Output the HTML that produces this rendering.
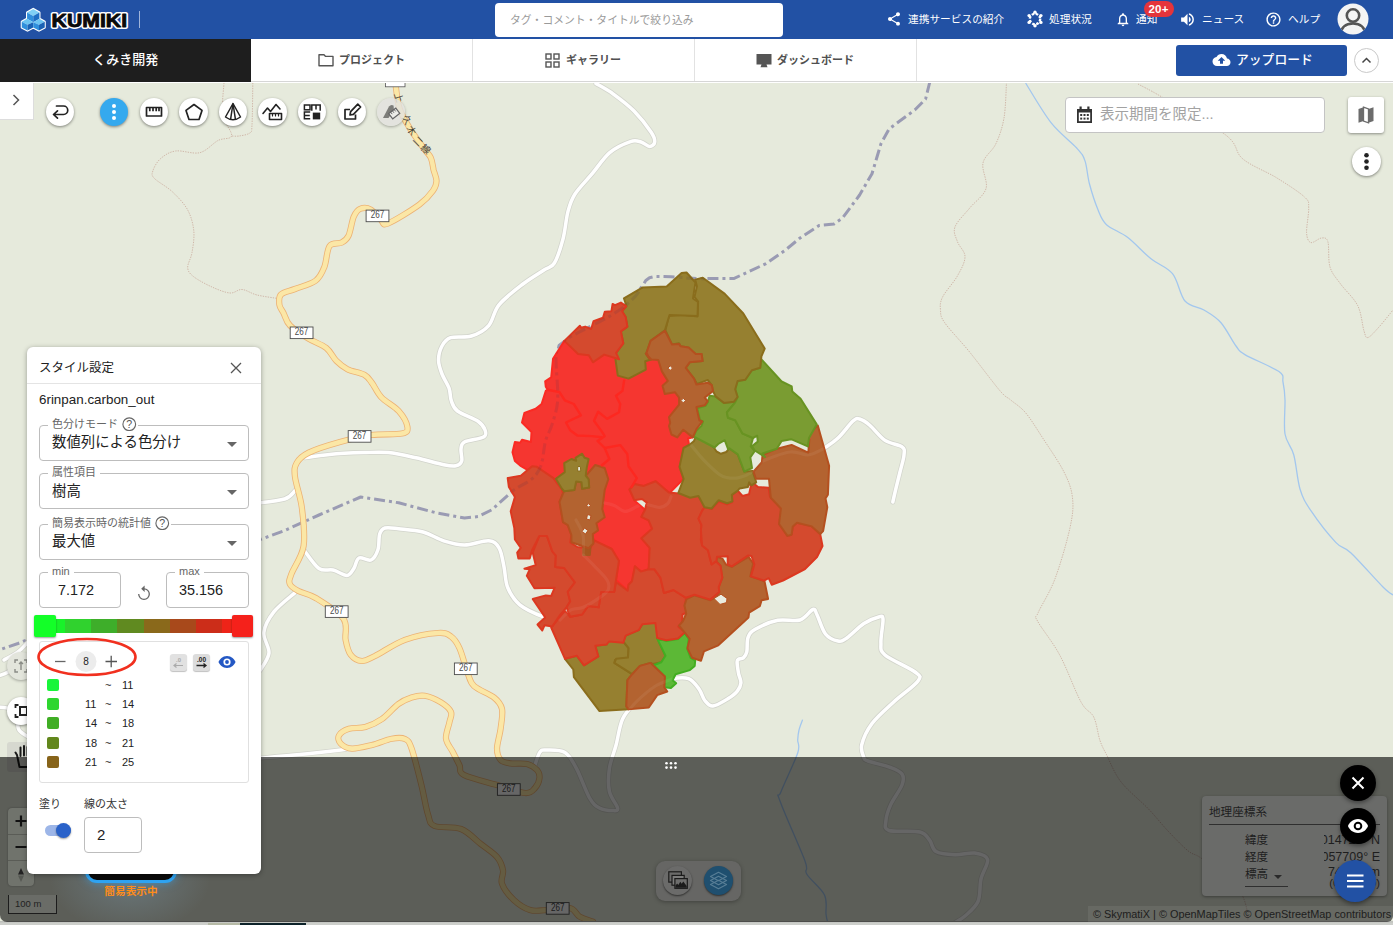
<!DOCTYPE html>
<html lang="ja">
<head>
<meta charset="utf-8">
<title>KUMIKI</title>
<style>
*{box-sizing:border-box;margin:0;padding:0}
html,body{width:1393px;height:925px;overflow:hidden;background:#e6eadc;font-family:"Liberation Sans","Noto Sans CJK JP",sans-serif;color:#222}
.abs{position:absolute}
#map{position:absolute;left:0;top:0;width:1393px;height:925px}
/* header */
#hdr{position:absolute;left:0;top:0;width:1393px;height:39px;background:#2251a4;color:#fff}
#hdr .t{position:absolute;top:12px;font-size:10.7px;line-height:14px;white-space:nowrap;color:#fff}
#search{position:absolute;left:495px;top:3px;width:288px;height:34px;background:#fff;border-radius:4px;color:#9a9a9a;font-size:10.8px;line-height:34px;padding-left:15px}
#nav{position:absolute;left:0;top:39px;width:1393px;height:44px;background:#fff}
#nav:after{content:'';position:absolute;left:251px;top:42px;width:1142px;height:1px;background:#d6d6d6}
#org{position:absolute;left:0;top:0;width:251px;height:43px;background:#1e1e1e;color:#fff;font-size:13px;font-weight:500;line-height:42px;text-align:center}
.tab{position:absolute;top:0;height:42px;width:222px;border-right:1px solid #e2e2e2;font-size:11px;font-weight:700;color:#505050;line-height:42px;text-align:center}
#upload{position:absolute;left:1176px;top:6px;width:171px;height:31px;background:#2251a4;border-radius:3px;color:#fff;font-size:12.800px;font-weight:500;line-height:30px}
.cbtn{position:absolute;width:30px;height:30px;border-radius:50%;background:#fff;box-shadow:0 1px 3px rgba(0,0,0,.45)}
.cbtn svg{position:absolute;left:0;top:0}
/* panel */
#panel{position:absolute;left:27.400px;top:346.800px;width:233.200px;height:527px;background:#fff;border-radius:6px;box-shadow:0 1px 5px rgba(0,0,0,.35)}
.fld{position:absolute;left:11px;width:210px;height:36px;border:1px solid #bdbdbd;border-radius:4px}
.fld .lb{position:absolute;left:8px;top:-9px;background:#fff;padding:0 4px;font-size:11px;line-height:14px;color:#666;white-space:nowrap}
.fld .v{position:absolute;left:12px;top:6px;font-size:14.4px;line-height:20px;color:#222;white-space:nowrap}
.fld .ar{position:absolute;right:11px;top:16px;width:0;height:0;border-left:5px solid transparent;border-right:5px solid transparent;border-top:5px solid #666}
.lg{position:absolute;left:7px;width:12px;height:12px;border-radius:2px}
.lt{position:absolute;font-size:11px;line-height:12px;color:#222}
</style>
</head>
<body>
<svg id="map" width="1393" height="925" viewBox="0 0 1393 925">
<rect x="0" y="0" width="1393" height="925" fill="#e6eadc"/>
<path d="M224.0,83.0 C223.8,86.5 222.5,98.0 222.5,104.0 C222.5,110.0 222.5,113.7 224.0,119.0 C225.5,124.3 232.6,132.4 231.6,136.0 C230.6,139.6 223.3,137.7 218.0,140.5 C212.7,143.3 206.9,150.9 199.8,152.7 C192.7,154.4 182.2,150.0 175.6,151.0 C169.0,152.0 164.3,155.4 160.5,158.7 C156.7,162.0 153.9,167.5 152.9,170.8 C151.9,174.1 151.1,174.9 154.4,178.4 C157.7,181.9 167.1,186.7 172.6,192.0 C178.1,197.3 184.2,203.5 187.7,210.0 C191.2,216.5 193.1,223.9 193.8,231.0 C194.5,238.1 193.0,246.5 192.0,252.6 C191.0,258.7 187.4,263.7 187.7,267.7 C188.0,271.7 189.8,273.6 193.8,276.8 C197.9,280.0 206.0,284.3 212.0,287.0 C218.0,289.7 225.0,292.6 230.0,293.0 C235.0,293.4 237.5,289.2 242.0,289.5 C246.5,289.8 250.9,293.5 257.0,295.0 C263.1,296.5 274.9,298.0 278.5,298.6" fill="none" stroke="#cdb2a4" stroke-width="0.9" stroke-dasharray="1.4,1.1"/>
<path d="M252.8,83.0 C252.7,90.0 252.5,116.7 252.0,125.0 C251.5,133.3 252.0,131.2 249.8,133.0 C247.6,134.8 242.0,135.5 239.0,136.0 C236.0,136.5 232.8,136.0 231.6,136.0" fill="none" stroke="#cdb2a4" stroke-width="0.9" stroke-dasharray="1.4,1.1"/>
<path d="M1006.5,82.0 C1006.1,88.0 1005.8,107.7 1004.0,118.0 C1002.2,128.3 999.3,136.4 995.8,143.9 C992.3,151.4 984.6,155.6 983.0,163.0 C981.4,170.4 988.2,181.2 986.0,188.6 C983.8,196.0 975.2,201.3 970.0,207.7 C964.8,214.1 957.1,221.2 955.0,226.9 C952.9,232.6 955.8,236.8 957.5,241.8 C959.2,246.8 965.0,251.0 965.0,256.7 C965.0,262.4 961.2,269.1 957.5,275.8 C953.8,282.5 945.4,291.3 942.6,297.0 C939.8,302.7 940.1,305.7 940.5,310.0 C940.9,314.3 939.8,315.6 944.7,322.7 C949.6,329.8 960.8,341.1 970.0,352.5 C979.2,363.9 993.2,382.9 1000.0,390.8 C1006.8,398.7 1006.4,396.3 1010.7,400.0 C1015.0,403.7 1020.3,406.5 1025.6,412.8 C1030.9,419.1 1036.3,428.1 1042.7,438.0 C1049.1,447.9 1059.0,462.0 1064.0,472.0 C1069.0,482.0 1071.5,488.7 1072.5,498.0 C1073.5,507.3 1072.9,514.2 1070.0,527.7 C1067.1,541.2 1060.3,564.6 1055.0,578.8 C1049.7,593.0 1040.9,606.0 1038.0,613.0 C1035.1,620.0 1033.9,614.0 1037.5,621.0 C1041.1,628.0 1052.5,641.5 1059.7,655.0 C1067.0,668.5 1075.3,691.7 1081.0,702.0 C1086.7,712.3 1090.5,710.6 1093.7,717.0 C1096.9,723.4 1097.8,734.3 1100.0,740.6 C1102.2,746.9 1103.1,747.9 1106.6,754.8 C1110.1,761.7 1114.0,772.9 1121.0,781.9 C1128.0,790.9 1140.7,800.8 1148.5,809.0 C1156.3,817.2 1161.4,824.0 1168.0,831.0 C1174.6,838.0 1182.5,846.3 1188.0,850.8 C1193.5,855.3 1194.0,853.1 1201.0,858.0 C1208.0,862.9 1223.2,873.8 1230.0,880.0 C1236.8,886.2 1239.2,890.0 1242.0,895.0 C1244.8,900.0 1246.0,905.5 1247.0,910.0 C1248.0,914.5 1247.8,920.0 1248.0,922.0" fill="none" stroke="#cdb2a4" stroke-width="0.9" stroke-dasharray="1.4,1.1"/>
<path d="M1138.0,84.0 C1142.0,86.2 1147.3,88.5 1161.9,97.0 C1176.5,105.5 1212.2,124.7 1225.7,135.0 C1239.2,145.3 1234.2,151.7 1242.7,158.8 C1251.2,166.0 1266.5,171.5 1276.8,177.9 C1287.1,184.3 1299.2,192.0 1304.5,197.0 C1309.8,202.0 1308.4,201.7 1308.7,207.7 C1309.0,213.7 1306.2,227.2 1306.6,233.0 C1307.0,238.8 1308.4,241.8 1310.9,242.6 C1313.4,243.4 1318.7,238.1 1321.5,238.0 C1324.3,237.9 1326.5,237.0 1327.9,241.8 C1329.3,246.6 1327.9,260.0 1330.0,267.0 C1332.1,274.0 1336.0,277.6 1340.6,284.0 C1345.2,290.4 1353.8,297.8 1357.7,305.6 C1361.6,313.4 1362.3,325.7 1364.0,331.0 C1365.7,336.3 1365.5,338.2 1368.0,337.5 C1370.5,336.8 1374.8,331.6 1379.0,327.0 C1383.2,322.4 1390.7,312.8 1393.0,310.0" fill="none" stroke="#cdb2a4" stroke-width="0.9" stroke-dasharray="1.4,1.1"/>
<path d="M1025.6,83.0 C1029.8,89.6 1042.5,111.8 1051.0,122.6 C1059.5,133.4 1071.0,141.6 1076.7,148.0 C1082.4,154.4 1082.9,154.9 1085.0,160.9 C1087.1,166.9 1087.3,175.8 1089.5,184.0 C1091.7,192.2 1095.2,203.0 1098.0,209.8 C1100.8,216.6 1101.5,220.1 1106.5,224.7 C1111.5,229.3 1120.4,231.8 1127.8,237.5 C1135.2,243.2 1143.5,252.8 1151.0,258.8 C1158.5,264.8 1166.8,266.7 1172.5,273.7 C1178.2,280.7 1179.8,294.9 1185.0,301.0 C1190.2,307.1 1198.0,306.4 1204.0,310.0 C1210.0,313.6 1215.7,316.7 1221.0,322.7 C1226.3,328.7 1232.0,340.7 1236.0,346.0 C1240.0,351.3 1237.7,350.3 1244.9,354.6 C1252.1,358.9 1272.7,367.0 1279.0,371.6 C1285.3,376.2 1282.0,377.3 1283.0,382.0 C1284.0,386.7 1284.7,391.3 1285.0,400.0 C1285.3,408.7 1283.5,424.8 1285.0,434.0 C1286.5,443.2 1291.3,445.8 1293.8,455.0 C1296.3,464.2 1297.2,479.7 1300.0,489.0 C1302.8,498.3 1304.9,501.8 1310.9,510.7 C1316.9,519.6 1329.3,535.6 1336.0,542.6 C1342.7,549.6 1343.2,545.6 1351.0,553.0 C1358.8,560.4 1376.0,580.0 1383.0,587.0 C1390.0,594.0 1391.3,593.7 1393.0,595.0" fill="none" stroke="#a3c7ee" stroke-width="1.3"/>
<path d="M802.6,719.6 C802.0,721.3 799.8,726.6 799.0,730.0 C798.2,733.4 797.9,736.2 797.7,740.0 C797.5,743.8 800.5,744.4 797.7,753.0 C794.9,761.6 784.0,783.7 781.0,791.7 C778.0,799.7 776.0,789.5 780.0,801.0 C784.0,812.5 800.5,848.8 805.0,861.0 C809.5,873.2 803.5,868.3 806.7,874.0 C810.0,879.7 821.3,888.3 824.5,895.0 C827.7,901.7 825.5,909.4 826.0,914.0 C826.5,918.6 827.4,921.1 827.7,922.5" fill="none" stroke="#a3c7ee" stroke-width="1.3"/>
<path d="M929.8,82.0 L925.6,99.0 L915.0,109.8 L889.0,129.0 L880.9,143.9 L872.0,173.7 L859.6,195.0 L842.6,218.0 L834.0,224.0 L819.0,225.6 L800.0,238.0 L785.5,250.0 L766.0,263.6 L733.7,278.6 L698.0,278.6 L671.0,276.7 L655.0,276.5 L649.5,277.8 L645.8,280.5 L643.7,284.0 L632.7,299.0 L611.0,315.5 L570.0,337.0 L559.0,345.5 L556.0,359.0 L557.7,400.0 L552.0,424.6 L545.5,441.0 L541.0,465.5 L531.8,479.0 L512.9,490.7 L492.0,509.7 L478.0,516.6 L464.5,518.0 L436.8,513.0 L398.7,502.8 L360.7,497.0 L319.0,515.0 L284.6,530.5 L255.0,541.5 L130.0,598.0 L18.0,643.5 L-4.0,651.0" fill="none" stroke="#9a9bb3" stroke-width="3" stroke-dasharray="11,4,3,4" stroke-linejoin="round"/>
<path d="M596.0,83.5 C598.8,85.2 606.7,89.2 613.0,93.8 C619.3,98.4 627.7,104.6 634.0,111.0 C640.3,117.4 647.5,126.8 651.0,132.0 C654.5,137.2 655.0,139.6 654.7,142.0 C654.5,144.4 651.8,146.4 649.5,146.4 C647.2,146.4 644.2,142.8 641.0,142.0 C637.8,141.2 635.7,139.8 630.5,141.6 C625.3,143.4 616.1,147.3 609.7,152.6 C603.4,157.9 598.2,166.5 592.4,173.4 C586.6,180.3 579.1,187.7 575.0,194.0 C570.9,200.3 570.0,203.9 568.0,211.4 C566.0,218.9 565.3,230.4 563.0,239.0 C560.7,247.6 557.6,257.8 554.4,263.0 C551.2,268.2 549.2,266.5 544.0,270.0 C538.8,273.5 530.5,278.2 523.0,284.0 C515.5,289.8 504.7,297.9 499.0,304.8 C493.3,311.7 493.3,320.4 488.7,325.6 C484.1,330.8 477.8,334.0 471.4,336.0 C465.0,338.0 455.5,336.0 450.6,337.7 C445.7,339.4 444.0,342.3 442.0,346.0 C440.0,349.7 438.5,355.3 438.5,360.0 C438.5,364.7 440.2,369.3 442.0,374.0 C443.8,378.7 447.4,383.6 449.0,388.0 C450.6,392.4 449.9,396.9 451.3,400.7 C452.7,404.5 453.0,407.5 457.5,411.0 C462.0,414.5 473.7,418.3 478.3,421.5 C482.9,424.7 484.1,427.4 485.0,430.0 C485.9,432.6 486.9,435.0 483.5,437.0 C480.1,439.0 468.2,440.0 464.5,442.0 C460.8,444.0 461.5,445.8 461.0,449.0 C460.5,452.2 462.6,458.2 461.7,461.0 C460.8,463.8 458.8,465.2 455.8,465.8 C452.8,466.4 450.3,466.0 443.7,464.7 C437.1,463.4 425.2,459.8 416.0,457.8 C406.8,455.8 397.1,453.5 388.4,452.6 C379.7,451.7 373.8,452.3 364.0,452.6 C354.2,452.9 339.4,453.5 329.6,454.4 C319.8,455.3 309.1,457.2 305.0,457.8" fill="none" stroke="#d2d4cc" stroke-width="5" stroke-linecap="round" stroke-linejoin="round"/>
<path d="M255.0,503.5 C259.9,502.8 277.9,501.1 284.6,499.0 C291.3,496.9 293.3,492.1 295.0,490.7" fill="none" stroke="#d2d4cc" stroke-width="5" stroke-linecap="round" stroke-linejoin="round"/>
<path d="M303.6,549.5 C306.2,552.7 314.1,565.1 319.0,568.5 C323.9,571.9 328.4,568.9 333.0,570.0 C337.6,571.1 343.4,575.6 346.9,575.4 C350.4,575.1 351.8,571.4 353.8,568.5 C355.8,565.6 356.1,559.4 359.0,558.0 C361.9,556.6 367.8,561.4 371.0,560.0 C374.2,558.6 376.6,553.8 378.0,549.5 C379.4,545.2 378.5,537.6 379.7,534.0 C380.9,530.4 381.8,528.9 385.0,528.0 C388.2,527.1 392.4,528.0 398.7,528.7 C405.0,529.4 415.5,530.0 423.0,532.0 C430.5,534.0 436.8,538.6 443.7,540.8 C450.6,543.0 457.0,545.0 464.5,545.0 C472.0,545.0 482.9,540.3 488.7,540.8 C494.4,541.3 496.4,543.5 499.0,547.8 C501.6,552.1 502.6,560.2 504.0,566.8 C505.4,573.4 505.1,581.2 507.7,587.5 C510.3,593.8 513.8,599.9 519.8,604.8 C525.8,609.7 537.3,614.5 544.0,617.0 C550.7,619.5 557.3,619.5 560.0,620.0" fill="none" stroke="#d2d4cc" stroke-width="5" stroke-linecap="round" stroke-linejoin="round"/>
<path d="M295.0,592.7 C291.5,595.9 279.2,605.1 274.0,611.7 C268.8,618.3 264.6,625.6 263.8,632.5 C263.0,639.4 269.6,646.7 269.0,653.0 C268.4,659.3 261.5,667.6 260.0,670.5" fill="none" stroke="#d2d4cc" stroke-width="5" stroke-linecap="round" stroke-linejoin="round"/>
<path d="M250.0,759.0 C258.3,758.2 284.0,756.1 300.0,754.5 C316.0,752.9 338.3,750.2 346.0,749.3" fill="none" stroke="#d2d4cc" stroke-width="5" stroke-linecap="round" stroke-linejoin="round"/>
<path d="M-2.0,676.0 C-0.3,675.3 4.7,674.0 8.0,672.0 C11.3,670.0 14.3,666.3 18.0,664.0 C21.7,661.7 28.0,659.0 30.0,658.0" fill="none" stroke="#d2d4cc" stroke-width="5" stroke-linecap="round" stroke-linejoin="round"/>
<path d="M-2.0,707.0 C0.0,707.3 6.8,707.2 10.0,709.0 C13.2,710.8 15.5,714.5 17.0,718.0 C18.5,721.5 16.8,726.7 19.0,730.0 C21.2,733.3 28.2,736.7 30.0,738.0" fill="none" stroke="#d2d4cc" stroke-width="5" stroke-linecap="round" stroke-linejoin="round"/>
<path d="M30.0,640.0 C28.0,642.0 22.3,648.7 18.0,652.0 C13.7,655.3 6.3,658.7 4.0,660.0" fill="none" stroke="#d2d4cc" stroke-width="5" stroke-linecap="round" stroke-linejoin="round"/>
<path d="M535.0,765.0 C535.8,762.8 538.0,754.5 540.0,752.0 C542.0,749.5 542.5,749.9 546.7,750.0 C550.9,750.1 560.0,749.4 565.0,752.5 C570.0,755.6 572.3,760.8 576.4,768.4 C580.5,776.0 585.8,791.4 589.6,798.0 C593.5,804.6 595.6,805.9 599.5,808.0 C603.4,810.1 609.7,810.6 612.7,810.6 C615.7,810.6 618.2,811.2 617.6,808.0 C617.0,804.8 610.8,798.0 609.4,791.4 C608.0,784.8 608.3,776.1 609.4,768.4 C610.5,760.7 613.8,753.5 616.0,745.3 C618.2,737.1 619.3,726.1 622.6,719.0 C625.9,711.9 630.3,707.9 635.8,702.4 C641.3,696.9 649.5,689.9 655.5,686.0 C661.5,682.1 666.5,680.2 672.0,679.0 C677.5,677.8 684.0,677.0 688.5,678.7 C693.0,680.4 696.3,685.4 699.0,689.0 C701.7,692.6 702.5,697.7 704.8,700.5 C707.1,703.3 709.2,706.3 713.0,706.0 C716.8,705.7 723.8,701.3 727.8,698.8 C731.8,696.3 735.1,693.8 737.3,691.1 C739.5,688.4 740.7,685.8 740.9,682.8 C741.1,679.8 739.1,676.8 738.5,673.3 C737.9,669.8 737.1,664.3 737.1,662.0 C737.1,659.7 737.5,660.0 738.5,659.3 C739.5,658.6 741.9,659.0 743.3,657.8 C744.7,656.6 746.0,655.3 746.8,651.9 C747.6,648.5 746.6,641.4 748.0,637.6 C749.4,633.8 750.2,632.2 755.2,629.3 C760.2,626.4 770.3,621.8 777.8,620.3 C785.3,618.8 794.2,621.8 800.0,620.0 C805.8,618.2 810.0,610.4 812.8,609.5 C815.6,608.6 814.9,610.6 817.0,614.7 C819.1,618.8 822.0,629.6 825.5,634.0 C829.0,638.4 834.5,640.3 838.0,641.0 C841.5,641.7 842.5,640.9 846.8,638.0 C851.1,635.1 858.6,627.0 863.9,623.5 C869.2,620.0 875.6,617.8 878.8,617.0 C882.0,616.2 882.6,614.7 883.0,619.0 C883.4,623.3 880.6,636.7 880.9,642.7 C881.2,648.7 879.3,650.1 885.0,655.0 C890.7,659.9 909.5,667.7 915.0,672.0 C920.5,676.3 921.5,676.0 918.0,681.0 C914.5,686.0 901.4,694.9 893.7,702.0 C886.0,709.1 877.3,716.4 872.0,723.5 C866.7,730.6 863.1,739.1 861.7,744.8 C860.4,750.5 862.9,754.9 863.9,757.6 C864.9,760.3 863.5,759.4 868.0,761.0 C872.5,762.6 885.0,765.3 890.7,767.5 C896.4,769.7 900.1,771.1 902.0,774.0 C903.9,776.9 903.9,779.9 902.0,785.0 C900.1,790.1 893.4,798.6 890.7,804.6 C888.0,810.6 886.2,816.5 885.9,820.8 C885.6,825.1 883.4,828.6 889.0,830.5 C894.6,832.4 913.0,830.4 919.8,832.0 C926.5,833.6 926.8,836.8 929.5,840.0 C932.2,843.2 931.8,849.0 936.0,851.5 C940.2,854.0 948.5,854.5 955.0,854.7 C961.5,855.0 969.3,852.2 974.7,853.0 C980.1,853.8 986.6,855.2 987.6,859.5 C988.6,863.8 982.6,872.0 981.0,879.0 C979.4,886.0 980.7,895.3 978.0,901.5 C975.3,907.7 968.8,912.5 965.0,916.0 C961.2,919.5 956.7,921.4 955.0,922.5" fill="none" stroke="#d2d4cc" stroke-width="5" stroke-linecap="round" stroke-linejoin="round"/>
<path d="M790.0,470.0 C795.5,466.5 815.0,454.3 823.0,449.0 C831.0,443.7 833.0,442.7 838.0,438.0 C843.0,433.3 849.4,424.2 853.0,421.0 C856.6,417.8 856.8,418.2 859.6,419.0 C862.4,419.8 865.8,421.9 870.0,425.5 C874.2,429.1 879.7,436.8 885.0,440.4 C890.3,443.9 898.8,444.4 902.0,446.8 C905.2,449.2 904.3,450.8 904.0,455.0 C903.7,459.2 901.4,466.3 900.0,472.0 C898.6,477.7 897.0,484.0 895.8,489.0 C894.6,494.0 893.3,499.8 892.8,502.0" fill="none" stroke="#d2d4cc" stroke-width="5" stroke-linecap="round" stroke-linejoin="round"/>
<path d="M596.0,83.5 C598.8,85.2 606.7,89.2 613.0,93.8 C619.3,98.4 627.7,104.6 634.0,111.0 C640.3,117.4 647.5,126.8 651.0,132.0 C654.5,137.2 655.0,139.6 654.7,142.0 C654.5,144.4 651.8,146.4 649.5,146.4 C647.2,146.4 644.2,142.8 641.0,142.0 C637.8,141.2 635.7,139.8 630.5,141.6 C625.3,143.4 616.1,147.3 609.7,152.6 C603.4,157.9 598.2,166.5 592.4,173.4 C586.6,180.3 579.1,187.7 575.0,194.0 C570.9,200.3 570.0,203.9 568.0,211.4 C566.0,218.9 565.3,230.4 563.0,239.0 C560.7,247.6 557.6,257.8 554.4,263.0 C551.2,268.2 549.2,266.5 544.0,270.0 C538.8,273.5 530.5,278.2 523.0,284.0 C515.5,289.8 504.7,297.9 499.0,304.8 C493.3,311.7 493.3,320.4 488.7,325.6 C484.1,330.8 477.8,334.0 471.4,336.0 C465.0,338.0 455.5,336.0 450.6,337.7 C445.7,339.4 444.0,342.3 442.0,346.0 C440.0,349.7 438.5,355.3 438.5,360.0 C438.5,364.7 440.2,369.3 442.0,374.0 C443.8,378.7 447.4,383.6 449.0,388.0 C450.6,392.4 449.9,396.9 451.3,400.7 C452.7,404.5 453.0,407.5 457.5,411.0 C462.0,414.5 473.7,418.3 478.3,421.5 C482.9,424.7 484.1,427.4 485.0,430.0 C485.9,432.6 486.9,435.0 483.5,437.0 C480.1,439.0 468.2,440.0 464.5,442.0 C460.8,444.0 461.5,445.8 461.0,449.0 C460.5,452.2 462.6,458.2 461.7,461.0 C460.8,463.8 458.8,465.2 455.8,465.8 C452.8,466.4 450.3,466.0 443.7,464.7 C437.1,463.4 425.2,459.8 416.0,457.8 C406.8,455.8 397.1,453.5 388.4,452.6 C379.7,451.7 373.8,452.3 364.0,452.6 C354.2,452.9 339.4,453.5 329.6,454.4 C319.8,455.3 309.1,457.2 305.0,457.8" fill="none" stroke="#ffffff" stroke-width="3.5" stroke-linecap="round" stroke-linejoin="round"/>
<path d="M255.0,503.5 C259.9,502.8 277.9,501.1 284.6,499.0 C291.3,496.9 293.3,492.1 295.0,490.7" fill="none" stroke="#ffffff" stroke-width="3.5" stroke-linecap="round" stroke-linejoin="round"/>
<path d="M303.6,549.5 C306.2,552.7 314.1,565.1 319.0,568.5 C323.9,571.9 328.4,568.9 333.0,570.0 C337.6,571.1 343.4,575.6 346.9,575.4 C350.4,575.1 351.8,571.4 353.8,568.5 C355.8,565.6 356.1,559.4 359.0,558.0 C361.9,556.6 367.8,561.4 371.0,560.0 C374.2,558.6 376.6,553.8 378.0,549.5 C379.4,545.2 378.5,537.6 379.7,534.0 C380.9,530.4 381.8,528.9 385.0,528.0 C388.2,527.1 392.4,528.0 398.7,528.7 C405.0,529.4 415.5,530.0 423.0,532.0 C430.5,534.0 436.8,538.6 443.7,540.8 C450.6,543.0 457.0,545.0 464.5,545.0 C472.0,545.0 482.9,540.3 488.7,540.8 C494.4,541.3 496.4,543.5 499.0,547.8 C501.6,552.1 502.6,560.2 504.0,566.8 C505.4,573.4 505.1,581.2 507.7,587.5 C510.3,593.8 513.8,599.9 519.8,604.8 C525.8,609.7 537.3,614.5 544.0,617.0 C550.7,619.5 557.3,619.5 560.0,620.0" fill="none" stroke="#ffffff" stroke-width="3.5" stroke-linecap="round" stroke-linejoin="round"/>
<path d="M295.0,592.7 C291.5,595.9 279.2,605.1 274.0,611.7 C268.8,618.3 264.6,625.6 263.8,632.5 C263.0,639.4 269.6,646.7 269.0,653.0 C268.4,659.3 261.5,667.6 260.0,670.5" fill="none" stroke="#ffffff" stroke-width="3.5" stroke-linecap="round" stroke-linejoin="round"/>
<path d="M250.0,759.0 C258.3,758.2 284.0,756.1 300.0,754.5 C316.0,752.9 338.3,750.2 346.0,749.3" fill="none" stroke="#ffffff" stroke-width="3.5" stroke-linecap="round" stroke-linejoin="round"/>
<path d="M-2.0,676.0 C-0.3,675.3 4.7,674.0 8.0,672.0 C11.3,670.0 14.3,666.3 18.0,664.0 C21.7,661.7 28.0,659.0 30.0,658.0" fill="none" stroke="#ffffff" stroke-width="3.5" stroke-linecap="round" stroke-linejoin="round"/>
<path d="M-2.0,707.0 C0.0,707.3 6.8,707.2 10.0,709.0 C13.2,710.8 15.5,714.5 17.0,718.0 C18.5,721.5 16.8,726.7 19.0,730.0 C21.2,733.3 28.2,736.7 30.0,738.0" fill="none" stroke="#ffffff" stroke-width="3.5" stroke-linecap="round" stroke-linejoin="round"/>
<path d="M30.0,640.0 C28.0,642.0 22.3,648.7 18.0,652.0 C13.7,655.3 6.3,658.7 4.0,660.0" fill="none" stroke="#ffffff" stroke-width="3.5" stroke-linecap="round" stroke-linejoin="round"/>
<path d="M535.0,765.0 C535.8,762.8 538.0,754.5 540.0,752.0 C542.0,749.5 542.5,749.9 546.7,750.0 C550.9,750.1 560.0,749.4 565.0,752.5 C570.0,755.6 572.3,760.8 576.4,768.4 C580.5,776.0 585.8,791.4 589.6,798.0 C593.5,804.6 595.6,805.9 599.5,808.0 C603.4,810.1 609.7,810.6 612.7,810.6 C615.7,810.6 618.2,811.2 617.6,808.0 C617.0,804.8 610.8,798.0 609.4,791.4 C608.0,784.8 608.3,776.1 609.4,768.4 C610.5,760.7 613.8,753.5 616.0,745.3 C618.2,737.1 619.3,726.1 622.6,719.0 C625.9,711.9 630.3,707.9 635.8,702.4 C641.3,696.9 649.5,689.9 655.5,686.0 C661.5,682.1 666.5,680.2 672.0,679.0 C677.5,677.8 684.0,677.0 688.5,678.7 C693.0,680.4 696.3,685.4 699.0,689.0 C701.7,692.6 702.5,697.7 704.8,700.5 C707.1,703.3 709.2,706.3 713.0,706.0 C716.8,705.7 723.8,701.3 727.8,698.8 C731.8,696.3 735.1,693.8 737.3,691.1 C739.5,688.4 740.7,685.8 740.9,682.8 C741.1,679.8 739.1,676.8 738.5,673.3 C737.9,669.8 737.1,664.3 737.1,662.0 C737.1,659.7 737.5,660.0 738.5,659.3 C739.5,658.6 741.9,659.0 743.3,657.8 C744.7,656.6 746.0,655.3 746.8,651.9 C747.6,648.5 746.6,641.4 748.0,637.6 C749.4,633.8 750.2,632.2 755.2,629.3 C760.2,626.4 770.3,621.8 777.8,620.3 C785.3,618.8 794.2,621.8 800.0,620.0 C805.8,618.2 810.0,610.4 812.8,609.5 C815.6,608.6 814.9,610.6 817.0,614.7 C819.1,618.8 822.0,629.6 825.5,634.0 C829.0,638.4 834.5,640.3 838.0,641.0 C841.5,641.7 842.5,640.9 846.8,638.0 C851.1,635.1 858.6,627.0 863.9,623.5 C869.2,620.0 875.6,617.8 878.8,617.0 C882.0,616.2 882.6,614.7 883.0,619.0 C883.4,623.3 880.6,636.7 880.9,642.7 C881.2,648.7 879.3,650.1 885.0,655.0 C890.7,659.9 909.5,667.7 915.0,672.0 C920.5,676.3 921.5,676.0 918.0,681.0 C914.5,686.0 901.4,694.9 893.7,702.0 C886.0,709.1 877.3,716.4 872.0,723.5 C866.7,730.6 863.1,739.1 861.7,744.8 C860.4,750.5 862.9,754.9 863.9,757.6 C864.9,760.3 863.5,759.4 868.0,761.0 C872.5,762.6 885.0,765.3 890.7,767.5 C896.4,769.7 900.1,771.1 902.0,774.0 C903.9,776.9 903.9,779.9 902.0,785.0 C900.1,790.1 893.4,798.6 890.7,804.6 C888.0,810.6 886.2,816.5 885.9,820.8 C885.6,825.1 883.4,828.6 889.0,830.5 C894.6,832.4 913.0,830.4 919.8,832.0 C926.5,833.6 926.8,836.8 929.5,840.0 C932.2,843.2 931.8,849.0 936.0,851.5 C940.2,854.0 948.5,854.5 955.0,854.7 C961.5,855.0 969.3,852.2 974.7,853.0 C980.1,853.8 986.6,855.2 987.6,859.5 C988.6,863.8 982.6,872.0 981.0,879.0 C979.4,886.0 980.7,895.3 978.0,901.5 C975.3,907.7 968.8,912.5 965.0,916.0 C961.2,919.5 956.7,921.4 955.0,922.5" fill="none" stroke="#ffffff" stroke-width="3.5" stroke-linecap="round" stroke-linejoin="round"/>
<path d="M790.0,470.0 C795.5,466.5 815.0,454.3 823.0,449.0 C831.0,443.7 833.0,442.7 838.0,438.0 C843.0,433.3 849.4,424.2 853.0,421.0 C856.6,417.8 856.8,418.2 859.6,419.0 C862.4,419.8 865.8,421.9 870.0,425.5 C874.2,429.1 879.7,436.8 885.0,440.4 C890.3,443.9 898.8,444.4 902.0,446.8 C905.2,449.2 904.3,450.8 904.0,455.0 C903.7,459.2 901.4,466.3 900.0,472.0 C898.6,477.7 897.0,484.0 895.8,489.0 C894.6,494.0 893.3,499.8 892.8,502.0" fill="none" stroke="#ffffff" stroke-width="3.5" stroke-linecap="round" stroke-linejoin="round"/>
<path d="M395.8,80.0 C395.8,81.3 395.4,83.2 396.0,88.0 C396.6,92.8 397.4,102.2 399.7,109.0 C402.0,115.8 406.0,122.1 410.0,128.6 C414.0,135.1 420.0,143.1 423.5,148.0 C427.0,152.9 429.1,154.1 430.8,157.8 C432.5,161.5 432.7,166.1 433.6,170.0 C434.6,173.9 436.6,177.6 436.5,181.0 C436.4,184.4 435.8,186.8 433.0,190.7 C430.2,194.6 427.0,199.0 419.5,204.5 C412.0,210.0 394.4,220.9 388.0,223.5 C381.6,226.1 383.8,222.3 381.0,220.0 C378.2,217.7 374.4,211.6 371.0,209.7 C367.6,207.8 363.6,207.5 360.7,208.7 C357.8,209.8 355.8,212.1 353.8,216.6 C351.8,221.1 350.6,231.3 348.6,235.6 C346.6,239.9 344.9,240.9 341.7,242.6 C338.5,244.3 332.5,242.0 329.6,246.0 C326.7,250.0 326.7,261.0 324.4,266.8 C322.1,272.6 320.6,276.9 315.7,280.6 C310.8,284.3 300.8,286.7 295.0,289.0 C289.2,291.3 283.6,291.9 281.0,294.5 C278.4,297.1 279.0,301.7 279.4,304.8 C279.8,307.9 281.7,309.6 283.5,313.0 C285.3,316.4 285.9,321.3 290.0,325.5 C294.1,329.7 301.9,334.6 308.0,338.3 C314.1,342.1 321.6,344.3 326.3,348.0 C331.0,351.7 332.7,357.2 336.2,360.7 C339.7,364.2 342.7,366.8 347.4,369.2 C352.1,371.6 360.2,372.5 364.3,374.8 C368.4,377.1 369.1,379.2 372.0,383.0 C374.9,386.8 376.9,392.6 381.4,397.3 C385.8,402.0 394.4,406.1 398.7,411.0 C403.0,415.9 406.8,422.9 407.4,426.7 C407.9,430.5 408.1,432.2 402.0,433.6 C395.9,435.0 381.3,433.6 371.0,435.0 C360.7,436.4 350.4,439.1 340.0,442.0 C329.6,444.9 316.0,449.1 308.8,452.6 C301.6,456.1 299.0,458.9 296.7,463.0 C294.4,467.1 294.1,469.4 295.0,476.9 C295.9,484.4 300.5,496.5 301.9,508.0 C303.3,519.5 305.3,535.0 303.6,546.0 C301.9,557.0 293.8,567.4 291.5,573.7 C289.2,580.0 288.7,581.1 289.8,584.0 C290.9,586.9 294.1,588.7 298.4,591.0 C302.7,593.3 308.2,593.4 315.7,598.0 C323.2,602.6 338.4,611.7 343.4,618.7 C348.4,625.7 344.4,633.8 345.6,639.8 C346.8,645.8 347.9,651.1 350.6,654.6 C353.3,658.1 357.9,660.8 362.0,661.0 C366.1,661.2 367.8,659.5 375.0,656.0 C382.2,652.5 394.5,643.6 405.0,639.8 C415.5,636.0 430.3,633.5 438.0,633.0 C445.7,632.5 447.4,634.0 451.0,636.5 C454.6,639.0 456.6,642.0 459.4,648.0 C462.2,654.0 465.2,666.5 467.6,672.8 C470.0,679.1 469.6,681.9 474.0,686.0 C478.4,690.1 489.3,693.7 494.0,697.5 C498.7,701.3 500.9,703.8 502.0,709.0 C503.1,714.2 501.4,722.2 500.6,728.8 C499.8,735.4 497.0,743.4 497.0,748.6 C497.0,753.8 498.4,757.5 500.6,760.0 C502.9,762.5 506.1,762.7 510.5,763.4 C514.9,764.1 522.6,762.9 527.0,764.0 C531.4,765.1 534.9,767.7 537.0,770.0 C539.1,772.3 539.8,775.0 539.5,778.0 C539.2,781.0 537.4,785.5 535.0,788.0 C532.6,790.5 531.3,793.5 525.0,793.0 C518.7,792.5 507.2,788.0 497.0,785.0 C486.8,782.0 470.3,778.3 464.0,775.0 C457.7,771.7 461.3,768.8 459.4,765.0 C457.5,761.2 455.0,756.4 452.8,752.0 C450.6,747.6 446.6,743.7 446.0,738.7 C445.4,733.7 448.7,726.5 449.5,722.0 C450.3,717.5 452.4,715.3 451.0,712.0 C449.6,708.7 445.4,705.1 441.0,702.4 C436.6,699.7 429.6,696.6 424.7,695.8 C419.8,695.0 416.0,696.1 411.6,697.5 C407.2,698.9 403.3,700.4 398.4,704.0 C393.5,707.6 387.5,715.2 382.0,719.0 C376.5,722.8 370.9,725.4 365.4,727.0 C359.9,728.6 353.4,727.4 349.0,728.8 C344.6,730.2 340.4,732.9 339.0,735.4 C337.6,737.9 338.5,741.4 340.7,743.6 C342.9,745.8 346.8,748.4 352.0,748.6 C357.2,748.8 365.4,746.6 372.0,745.0 C378.6,743.4 386.3,739.7 391.8,738.7 C397.3,737.7 401.7,737.4 405.0,739.0 C408.3,740.6 408.9,740.9 411.6,748.6 C414.3,756.3 418.7,774.0 421.4,785.0 C424.1,796.0 425.8,807.7 428.0,814.5 C430.2,821.3 429.1,823.6 434.6,826.0 C440.1,828.4 453.3,826.0 461.0,829.0 C468.7,832.0 474.8,839.3 480.8,844.0 C486.8,848.7 493.3,852.6 497.0,857.0 C500.7,861.4 502.2,866.0 503.0,870.5 C503.8,875.0 500.2,878.8 502.0,883.7 C503.8,888.6 509.1,895.6 513.8,900.0 C518.5,904.4 524.5,908.3 530.0,910.0 C535.5,911.7 540.1,910.3 546.7,910.0 C553.3,909.7 564.3,906.9 569.8,908.0 C575.3,909.1 575.8,914.4 579.7,916.7 C583.6,919.0 590.8,920.9 593.0,921.7" fill="none" stroke="#ecb274" stroke-width="6.2" stroke-linecap="round" stroke-linejoin="round"/>
<path d="M395.8,80.0 C395.8,81.3 395.4,83.2 396.0,88.0 C396.6,92.8 397.4,102.2 399.7,109.0 C402.0,115.8 406.0,122.1 410.0,128.6 C414.0,135.1 420.0,143.1 423.5,148.0 C427.0,152.9 429.1,154.1 430.8,157.8 C432.5,161.5 432.7,166.1 433.6,170.0 C434.6,173.9 436.6,177.6 436.5,181.0 C436.4,184.4 435.8,186.8 433.0,190.7 C430.2,194.6 427.0,199.0 419.5,204.5 C412.0,210.0 394.4,220.9 388.0,223.5 C381.6,226.1 383.8,222.3 381.0,220.0 C378.2,217.7 374.4,211.6 371.0,209.7 C367.6,207.8 363.6,207.5 360.7,208.7 C357.8,209.8 355.8,212.1 353.8,216.6 C351.8,221.1 350.6,231.3 348.6,235.6 C346.6,239.9 344.9,240.9 341.7,242.6 C338.5,244.3 332.5,242.0 329.6,246.0 C326.7,250.0 326.7,261.0 324.4,266.8 C322.1,272.6 320.6,276.9 315.7,280.6 C310.8,284.3 300.8,286.7 295.0,289.0 C289.2,291.3 283.6,291.9 281.0,294.5 C278.4,297.1 279.0,301.7 279.4,304.8 C279.8,307.9 281.7,309.6 283.5,313.0 C285.3,316.4 285.9,321.3 290.0,325.5 C294.1,329.7 301.9,334.6 308.0,338.3 C314.1,342.1 321.6,344.3 326.3,348.0 C331.0,351.7 332.7,357.2 336.2,360.7 C339.7,364.2 342.7,366.8 347.4,369.2 C352.1,371.6 360.2,372.5 364.3,374.8 C368.4,377.1 369.1,379.2 372.0,383.0 C374.9,386.8 376.9,392.6 381.4,397.3 C385.8,402.0 394.4,406.1 398.7,411.0 C403.0,415.9 406.8,422.9 407.4,426.7 C407.9,430.5 408.1,432.2 402.0,433.6 C395.9,435.0 381.3,433.6 371.0,435.0 C360.7,436.4 350.4,439.1 340.0,442.0 C329.6,444.9 316.0,449.1 308.8,452.6 C301.6,456.1 299.0,458.9 296.7,463.0 C294.4,467.1 294.1,469.4 295.0,476.9 C295.9,484.4 300.5,496.5 301.9,508.0 C303.3,519.5 305.3,535.0 303.6,546.0 C301.9,557.0 293.8,567.4 291.5,573.7 C289.2,580.0 288.7,581.1 289.8,584.0 C290.9,586.9 294.1,588.7 298.4,591.0 C302.7,593.3 308.2,593.4 315.7,598.0 C323.2,602.6 338.4,611.7 343.4,618.7 C348.4,625.7 344.4,633.8 345.6,639.8 C346.8,645.8 347.9,651.1 350.6,654.6 C353.3,658.1 357.9,660.8 362.0,661.0 C366.1,661.2 367.8,659.5 375.0,656.0 C382.2,652.5 394.5,643.6 405.0,639.8 C415.5,636.0 430.3,633.5 438.0,633.0 C445.7,632.5 447.4,634.0 451.0,636.5 C454.6,639.0 456.6,642.0 459.4,648.0 C462.2,654.0 465.2,666.5 467.6,672.8 C470.0,679.1 469.6,681.9 474.0,686.0 C478.4,690.1 489.3,693.7 494.0,697.5 C498.7,701.3 500.9,703.8 502.0,709.0 C503.1,714.2 501.4,722.2 500.6,728.8 C499.8,735.4 497.0,743.4 497.0,748.6 C497.0,753.8 498.4,757.5 500.6,760.0 C502.9,762.5 506.1,762.7 510.5,763.4 C514.9,764.1 522.6,762.9 527.0,764.0 C531.4,765.1 534.9,767.7 537.0,770.0 C539.1,772.3 539.8,775.0 539.5,778.0 C539.2,781.0 537.4,785.5 535.0,788.0 C532.6,790.5 531.3,793.5 525.0,793.0 C518.7,792.5 507.2,788.0 497.0,785.0 C486.8,782.0 470.3,778.3 464.0,775.0 C457.7,771.7 461.3,768.8 459.4,765.0 C457.5,761.2 455.0,756.4 452.8,752.0 C450.6,747.6 446.6,743.7 446.0,738.7 C445.4,733.7 448.7,726.5 449.5,722.0 C450.3,717.5 452.4,715.3 451.0,712.0 C449.6,708.7 445.4,705.1 441.0,702.4 C436.6,699.7 429.6,696.6 424.7,695.8 C419.8,695.0 416.0,696.1 411.6,697.5 C407.2,698.9 403.3,700.4 398.4,704.0 C393.5,707.6 387.5,715.2 382.0,719.0 C376.5,722.8 370.9,725.4 365.4,727.0 C359.9,728.6 353.4,727.4 349.0,728.8 C344.6,730.2 340.4,732.9 339.0,735.4 C337.6,737.9 338.5,741.4 340.7,743.6 C342.9,745.8 346.8,748.4 352.0,748.6 C357.2,748.8 365.4,746.6 372.0,745.0 C378.6,743.4 386.3,739.7 391.8,738.7 C397.3,737.7 401.7,737.4 405.0,739.0 C408.3,740.6 408.9,740.9 411.6,748.6 C414.3,756.3 418.7,774.0 421.4,785.0 C424.1,796.0 425.8,807.7 428.0,814.5 C430.2,821.3 429.1,823.6 434.6,826.0 C440.1,828.4 453.3,826.0 461.0,829.0 C468.7,832.0 474.8,839.3 480.8,844.0 C486.8,848.7 493.3,852.6 497.0,857.0 C500.7,861.4 502.2,866.0 503.0,870.5 C503.8,875.0 500.2,878.8 502.0,883.7 C503.8,888.6 509.1,895.6 513.8,900.0 C518.5,904.4 524.5,908.3 530.0,910.0 C535.5,911.7 540.1,910.3 546.7,910.0 C553.3,909.7 564.3,906.9 569.8,908.0 C575.3,909.1 575.8,914.4 579.7,916.7 C583.6,919.0 590.8,920.9 593.0,921.7" fill="none" stroke="#fbe7a6" stroke-width="4.6" stroke-linecap="round" stroke-linejoin="round"/>
<g><rect x="366.1" y="210.1" width="22.800" height="11.600" fill="#fff" stroke="#4c4c4c" stroke-width="0.900"/><text x="377.5" y="218.20000000000002" font-family="Liberation Sans, sans-serif" font-size="10.500" font-weight="400" fill="#4a4a4a" text-anchor="middle" textLength="13.500" lengthAdjust="spacingAndGlyphs">267</text></g>
<g><rect x="290.20000000000005" y="327.0" width="22.800" height="11.600" fill="#fff" stroke="#4c4c4c" stroke-width="0.900"/><text x="301.6" y="335.1" font-family="Liberation Sans, sans-serif" font-size="10.500" font-weight="400" fill="#4a4a4a" text-anchor="middle" textLength="13.500" lengthAdjust="spacingAndGlyphs">267</text></g>
<g><rect x="348.20000000000005" y="430.59999999999997" width="22.800" height="11.600" fill="#fff" stroke="#4c4c4c" stroke-width="0.900"/><text x="359.6" y="438.7" font-family="Liberation Sans, sans-serif" font-size="10.500" font-weight="400" fill="#4a4a4a" text-anchor="middle" textLength="13.500" lengthAdjust="spacingAndGlyphs">267</text></g>
<g><rect x="325.3" y="605.8000000000001" width="22.800" height="11.600" fill="#fff" stroke="#4c4c4c" stroke-width="0.900"/><text x="336.7" y="613.9" font-family="Liberation Sans, sans-serif" font-size="10.500" font-weight="400" fill="#4a4a4a" text-anchor="middle" textLength="13.500" lengthAdjust="spacingAndGlyphs">267</text></g>
<g><rect x="454.40000000000003" y="663.0" width="22.800" height="11.600" fill="#fff" stroke="#4c4c4c" stroke-width="0.900"/><text x="465.8" y="671.0999999999999" font-family="Liberation Sans, sans-serif" font-size="10.500" font-weight="400" fill="#4a4a4a" text-anchor="middle" textLength="13.500" lengthAdjust="spacingAndGlyphs">267</text></g>
<g><rect x="497.40000000000003" y="783.7" width="22.800" height="11.600" fill="#fff" stroke="#4c4c4c" stroke-width="0.900"/><text x="508.8" y="791.8" font-family="Liberation Sans, sans-serif" font-size="10.500" font-weight="400" fill="#4a4a4a" text-anchor="middle" textLength="13.500" lengthAdjust="spacingAndGlyphs">267</text></g>
<g><rect x="546.3000000000001" y="902.6" width="22.800" height="11.600" fill="#fff" stroke="#4c4c4c" stroke-width="0.900"/><text x="557.7" y="910.6999999999999" font-family="Liberation Sans, sans-serif" font-size="10.500" font-weight="400" fill="#4a4a4a" text-anchor="middle" textLength="13.500" lengthAdjust="spacingAndGlyphs">267</text></g>
<rect x="385.5" y="80" width="19.500" height="6.800" fill="#fff" stroke="#555" stroke-width="0.800"/>
<g font-family="Liberation Sans, Noto Sans CJK JP, sans-serif" font-size="9.500" fill="#3e3e3a" text-anchor="middle">
<text transform="translate(398.400,97.600) rotate(72)" y="3">上</text>
<text transform="translate(406.600,120) rotate(62)" y="3">久</text>
<text transform="translate(411.200,130.800) rotate(56)" y="3">木</text>
<text transform="translate(417.800,141.600) rotate(45)" y="3">二</text>
<text transform="translate(425.600,149.600) rotate(40)" y="3">線</text>
</g>
<defs><clipPath id="polyclip"><path d="M564.4,340.9 L553.0,358.7 L552.9,360.0 L551.2,377.2 L545.2,381.4 L545.8,386.8 L547.6,389.7 L545.8,390.9 L541.6,404.0 L535.7,408.8 L524.4,412.9 L522.0,422.5 L531.5,432.0 L530.9,442.0 L522.0,439.7 L520.2,442.7 L514.9,442.0 L512.5,452.2 L514.9,461.1 L520.2,465.6 L526.2,469.1 L540.0,480.0 L570.0,500.0 L594.6,540.7 L611.8,549.0 L619.0,560.9 L616.0,580.0 L627.9,590.7 L628.5,584.7 L632.0,581.2 L635.0,566.3 L641.0,571.6 L648.7,569.3 L649.7,547.8 L641.4,538.3 L652.1,528.7 L648.6,520.4 L641.4,516.8 L645.0,509.7 L635.5,501.4 L634.3,500.2 L629.5,489.5 L634.3,484.1 L643.8,485.9 L655.7,481.2 L668.8,492.5 L670.0,492.5 L683.6,478.8 L679.5,466.9 L683.6,447.8 L689.0,444.5 L688.0,438.5 L692.8,437.4 L700.0,400.0 L680.0,350.0 L620.0,350.0Z"/><path d="M565.0,658.8 L576.9,655.8 L584.0,665.3 L598.3,656.4 L595.3,645.7 L606.6,644.5 L609.0,638.6 L623.3,641.5 L628.6,648.1 L628.0,657.6 L615.0,660.0 L614.4,662.9 L632.2,674.2 L627.4,680.2 L626.3,706.4 L628.6,709.3 L599.5,711.1 L573.9,677.2 L573.3,669.5Z"/><path d="M623.3,641.5 L625.7,635.6 L638.7,630.2 L642.3,624.3 L645.9,621.9 L659.0,620.1 L660.7,625.5 L657.8,627.8 L657.2,638.0 L665.5,655.8 L661.3,662.3 L653.0,664.1 L650.6,662.9 L639.9,665.9 L632.2,674.2 L614.4,662.9 L616.1,658.8 L628.0,657.6 L628.6,648.1Z"/><path d="M657.2,638.6 L666.1,640.9 L678.0,639.1 L684.5,633.2 L688.7,638.6 L687.5,649.3 L690.5,657.6 L695.2,660.6 L694.7,665.9 L689.9,670.1 L675.6,674.2 L672.6,680.2 L676.2,683.2 L670.9,687.9 L664.3,687.3 L664.9,676.6 L653.6,665.3 L661.3,662.3 L665.5,655.8Z"/><path d="M632.2,674.2 L639.9,665.9 L650.6,662.9 L653.0,665.3 L664.9,676.6 L664.3,687.3 L667.3,691.5 L657.2,695.1 L648.8,707.5 L628.6,709.3 L626.3,706.4 L627.4,680.2Z"/><path d="M551.2,627.5 L564.8,610.9 L570.2,616.8 L582.1,614.5 L588.0,606.1 L598.7,607.3 L601.1,591.9 L614.2,591.9 L616.0,582.0 L627.7,590.7 L628.5,584.7 L631.9,581.2 L634.9,566.3 L640.8,571.6 L648.6,569.3 L654.5,569.3 L660.4,577.6 L664.0,593.0 L673.5,590.0 L686.0,597.8 L684.8,606.1 L687.8,612.1 L682.5,614.5 L682.0,622.5 L678.3,626.4 L684.8,632.3 L678.0,638.6 L666.1,640.3 L657.2,638.0 L655.4,623.1 L642.3,624.3 L638.7,630.2 L625.7,635.6 L623.3,642.7 L609.0,641.5 L606.6,644.5 L595.3,645.7 L598.3,656.4 L584.0,665.3 L576.9,655.8 L565.0,658.8Z"/><path d="M539.3,536.0 L547.0,536.0 L552.3,551.4 L555.9,555.6 L555.3,566.9 L564.2,568.0 L574.9,582.3 L567.8,591.9 L570.2,601.4 L566.6,607.3 L559.5,615.7 L552.3,626.4 L544.6,625.2 L542.2,630.5 L537.5,624.6 L545.2,617.4 L532.7,599.0 L545.8,595.4 L551.2,596.0 L554.7,587.7 L534.5,588.3 L526.8,575.8 L529.7,569.3 L524.4,568.7 L535.7,565.1 L532.7,552.6Z"/><path d="M507.7,478.1 L520.8,475.7 L532.1,466.2 L536.9,466.8 L553.5,478.1 L555.9,481.6 L561.9,489.4 L563.0,493.5 L559.5,501.9 L563.0,522.1 L567.8,525.1 L571.4,535.2 L570.2,542.3 L577.3,547.0 L588.6,548.3 L590.4,547.8 L594.6,540.7 L611.8,549.0 L619.0,560.9 L616.0,580.0 L614.2,591.9 L601.1,591.9 L598.7,607.3 L588.0,606.1 L582.1,614.5 L570.2,616.8 L566.6,607.3 L570.2,601.4 L567.8,591.9 L574.9,582.3 L564.2,568.0 L555.3,566.9 L555.9,555.6 L552.3,551.4 L547.0,536.0 L539.3,536.0 L532.1,550.2 L529.7,558.6 L518.4,558.6 L517.2,552.6 L520.8,547.8 L514.9,539.5 L514.3,528.0 L510.7,511.4 L514.9,497.1 L508.9,487.0Z"/><path d="M686.6,599.0 L694.4,595.4 L710.4,600.2 L715.2,597.8 L719.3,591.9 L718.7,587.1 L722.3,577.6 L720.5,565.7 L716.4,561.5 L717.0,556.8 L722.3,558.6 L725.9,564.5 L731.8,566.9 L748.5,556.8 L753.2,563.3 L750.3,576.4 L764.5,581.2 L768.1,599.0 L761.6,600.2 L759.8,606.1 L749.1,612.7 L748.5,617.4 L718.3,645.3 L704.0,651.3 L701.0,660.8 L692.1,657.8 L687.4,648.3 L689.7,638.8 L685.0,632.8 L679.0,625.7 L683.0,621.0 L686.2,613.5 L684.4,605.5Z"/><path d="M629.5,489.5 L634.3,484.1 L643.8,485.9 L655.7,481.2 L668.8,492.5 L690.2,494.8 L698.5,496.0 L704.5,507.3 L702.1,510.9 L698.5,518.6 L701.5,525.2 L700.9,540.0 L702.1,545.5 L708.0,550.2 L711.6,564.5 L716.0,561.5 L720.5,565.7 L722.3,577.6 L718.7,587.1 L719.3,591.9 L710.4,599.6 L694.4,594.8 L686.0,597.8 L673.5,590.0 L664.0,593.0 L660.4,577.6 L654.5,569.3 L648.6,569.3 L649.7,547.8 L641.4,538.3 L652.1,528.7 L648.6,520.4 L641.4,516.8 L645.0,509.7 L646.8,502.6 L642.0,499.0 L634.3,500.2Z"/><path d="M704.5,507.3 L711.6,509.1 L718.7,501.4 L727.1,504.4 L732.4,502.0 L731.8,494.8 L737.8,490.7 L742.5,496.0 L749.1,494.2 L750.9,485.9 L747.9,482.9 L750.9,481.2 L758.0,487.1 L768.7,487.7 L769.9,496.6 L781.5,508.5 L779.1,524.0 L787.4,535.9 L791.6,534.7 L792.8,526.4 L797.0,522.8 L811.8,526.4 L820.2,534.1 L822.5,546.0 L817.0,557.0 L805.0,569.0 L783.0,580.5 L771.7,584.7 L768.7,578.2 L763.9,580.6 L750.9,576.4 L754.4,564.5 L751.5,556.0 L747.9,555.6 L731.8,566.3 L727.7,564.5 L727.7,556.2 L717.0,556.8 L716.4,560.9 L711.6,564.5 L708.0,550.2 L702.1,545.5 L700.9,530.0 L701.5,525.2 L698.5,518.6 L702.1,510.9Z"/><path d="M697.3,433.6 L714.0,447.8 L716.5,451.5 L720.9,453.8 L726.3,452.0 L729.4,448.4 L737.8,454.4 L744.3,471.6 L752.6,471.0 L756.2,482.3 L751.5,485.3 L749.1,482.3 L747.9,487.0 L739.5,488.5 L737.8,490.7 L731.8,494.8 L732.4,501.4 L727.1,503.2 L718.7,500.2 L711.6,508.5 L704.5,507.3 L698.5,496.0 L690.2,497.8 L678.3,493.0 L683.6,478.8 L679.5,466.9 L683.6,447.8 L690.2,444.3 L693.8,441.3Z"/><path d="M817.8,425.5 L829.1,465.7 L827.9,494.8 L825.5,498.4 L827.3,507.3 L823.1,531.1 L820.2,534.1 L811.8,526.4 L797.0,522.8 L792.8,526.4 L791.6,534.7 L787.4,535.9 L779.1,524.0 L780.9,508.5 L770.8,497.8 L769.0,478.8 L755.9,478.8 L753.5,471.6 L761.9,462.1 L762.5,455.0 L776.1,449.0 L791.6,444.9 L808.3,452.6 L809.4,439.5 L807.7,437.1 L813.0,430.0Z"/><path d="M709.6,395.8 L715.6,396.4 L723.9,402.9 L734.0,401.7 L735.2,402.3 L726.9,412.5 L728.0,417.8 L735.2,420.2 L742.3,433.3 L753.0,438.0 L750.7,446.4 L754.8,451.0 L750.3,457.4 L752.0,468.0 L744.3,471.6 L737.8,454.4 L729.4,448.4 L728.2,449.5 L724.7,440.2 L718.2,444.0 L714.6,447.5 L693.5,436.5 L696.0,431.0 L701.3,426.1 L703.1,421.4 L700.1,420.2 L697.1,408.3 L705.5,405.9 L707.8,402.3Z"/><path d="M762.6,360.7 L781.6,381.5 L791.7,386.3 L792.3,391.6 L800.6,398.8 L816.7,424.4 L809.0,438.0 L807.8,446.4 L791.1,439.2 L781.6,441.0 L776.8,448.7 L762.6,453.5 L765.0,457.0 L754.8,450.5 L751.9,446.4 L757.8,441.6 L757.2,435.7 L753.0,438.0 L742.3,433.3 L735.2,420.2 L728.0,417.8 L726.9,412.5 L735.2,402.3 L737.6,397.0 L735.2,389.3 L737.6,380.9 L745.3,379.7 L751.9,370.2 L760.2,367.8 L761.4,359.5Z"/><path d="M695.1,279.6 L702.8,277.8 L724.8,293.9 L743.3,313.5 L764.7,348.6 L761.4,356.4 L760.2,367.8 L751.9,370.2 L745.3,379.7 L737.6,380.9 L735.2,389.3 L737.6,397.0 L734.0,401.7 L723.9,402.9 L715.6,396.4 L713.0,391.0 L711.8,385.1 L707.7,380.0 L697.1,383.9 L694.0,378.6 L685.7,367.8 L689.7,362.3 L702.6,361.1 L701.6,354.0 L695.7,354.0 L688.0,347.4 L680.8,346.2 L679.0,343.3 L671.9,344.5 L665.4,330.2 L668.9,315.9 L683.2,314.7 L697.5,316.5 L698.1,301.6 L694.5,296.9 L696.9,286.2Z"/><path d="M623.9,298.3 L642.3,287.6 L666.7,286.4 L681.6,273.1 L686.5,272.5 L695.5,282.5 L693.0,298.4 L698.0,302.0 L697.5,316.0 L683.5,315.5 L669.5,315.0 L664.9,330.2 L650.6,340.9 L646.5,352.8 L649.4,358.7 L645.8,353.6 L651.2,359.5 L645.2,361.3 L645.8,369.6 L628.6,378.6 L617.8,375.6 L615.5,359.5 L616.1,352.8 L623.3,343.3 L620.9,331.4 L627.4,326.6 L625.7,317.1 L622.1,311.2 L626.5,306.0Z"/><path d="M664.9,330.8 L672.0,344.5 L679.2,343.9 L680.4,346.2 L688.7,347.4 L695.7,354.0 L701.6,354.0 L702.6,361.1 L689.7,362.3 L685.7,367.8 L694.0,378.6 L696.4,384.5 L707.7,382.7 L711.8,385.1 L713.0,391.0 L704.7,397.6 L707.7,401.2 L704.7,405.3 L696.4,407.1 L699.3,420.2 L702.3,421.4 L698.7,426.1 L696.4,429.1 L692.8,437.4 L683.3,429.7 L677.3,437.4 L671.4,434.5 L669.0,426.1 L670.2,422.6 L669.0,417.2 L679.1,404.7 L679.1,397.6 L674.9,392.2 L664.8,394.0 L662.5,385.7 L667.8,380.9 L661.9,371.4 L658.3,360.1 L651.2,359.5 L645.8,353.6 L649.4,358.7 L646.5,352.8 L650.6,340.9Z"/><path d="M564.4,340.9 L579.9,325.7 L581.0,327.8 L585.2,326.6 L591.2,329.0 L593.5,321.3 L603.0,317.7 L604.8,311.7 L611.4,311.2 L612.6,304.0 L615.0,305.2 L620.9,302.6 L626.2,306.4 L622.1,311.2 L625.7,317.1 L627.4,326.6 L620.9,331.4 L623.3,343.3 L616.1,352.8 L619.1,359.3 L604.2,354.6 L592.9,362.3 L588.8,355.2 L578.1,354.0Z"/><path d="M583.3,546.5 L590.4,547.8 L589.8,555.0 L583.3,555.0Z"/><path d="M588.6,472.7 L595.2,465.0 L604.7,468.0 L608.3,479.3 L604.7,490.0 L602.3,509.0 L604.7,517.3 L596.4,523.3 L598.1,530.4 L592.8,534.0 L593.4,543.5 L588.6,548.3 L571.4,542.3 L571.4,535.2 L567.8,525.1 L563.0,522.1 L559.5,501.9 L563.0,493.5 L564.2,491.2 L574.4,490.0 L576.1,481.6 L581.5,482.2 L582.1,488.8 L589.2,487.6 L588.6,479.3 L585.7,475.7Z"/><path d="M555.9,478.7 L564.8,472.1 L564.2,463.2 L571.4,459.0 L576.1,460.8 L575.5,457.8 L582.1,453.7 L584.5,457.8 L588.6,459.0 L586.8,467.4 L585.7,475.7 L588.6,479.3 L589.2,487.6 L582.1,488.8 L581.5,482.2 L576.1,481.6 L574.4,490.0 L564.2,491.2 L561.9,488.8Z"/></clipPath></defs>
<path d="M564.4,340.9 L553.0,358.7 L552.9,360.0 L551.2,377.2 L545.2,381.4 L545.8,386.8 L547.6,389.7 L545.8,390.9 L541.6,404.0 L535.7,408.8 L524.4,412.9 L522.0,422.5 L531.5,432.0 L530.9,442.0 L522.0,439.7 L520.2,442.7 L514.9,442.0 L512.5,452.2 L514.9,461.1 L520.2,465.6 L526.2,469.1 L540.0,480.0 L570.0,500.0 L594.6,540.7 L611.8,549.0 L619.0,560.9 L616.0,580.0 L627.9,590.7 L628.5,584.7 L632.0,581.2 L635.0,566.3 L641.0,571.6 L648.7,569.3 L649.7,547.8 L641.4,538.3 L652.1,528.7 L648.6,520.4 L641.4,516.8 L645.0,509.7 L635.5,501.4 L634.3,500.2 L629.5,489.5 L634.3,484.1 L643.8,485.9 L655.7,481.2 L668.8,492.5 L670.0,492.5 L683.6,478.8 L679.5,466.9 L683.6,447.8 L689.0,444.5 L688.0,438.5 L692.8,437.4 L700.0,400.0 L680.0,350.0 L620.0,350.0Z" fill="#f53630" stroke="#fb2a23" stroke-width="2" stroke-linejoin="round"/>
<path d="M565.0,658.8 L576.9,655.8 L584.0,665.3 L598.3,656.4 L595.3,645.7 L606.6,644.5 L609.0,638.6 L623.3,641.5 L628.6,648.1 L628.0,657.6 L615.0,660.0 L614.4,662.9 L632.2,674.2 L627.4,680.2 L626.3,706.4 L628.6,709.3 L599.5,711.1 L573.9,677.2 L573.3,669.5Z" fill="#968030" stroke="#8a6d1c" stroke-width="2" stroke-linejoin="round"/>
<path d="M623.3,641.5 L625.7,635.6 L638.7,630.2 L642.3,624.3 L645.9,621.9 L659.0,620.1 L660.7,625.5 L657.8,627.8 L657.2,638.0 L665.5,655.8 L661.3,662.3 L653.0,664.1 L650.6,662.9 L639.9,665.9 L632.2,674.2 L614.4,662.9 L616.1,658.8 L628.0,657.6 L628.6,648.1Z" fill="#968030" stroke="#8a6d1c" stroke-width="2" stroke-linejoin="round"/>
<path d="M657.2,638.6 L666.1,640.9 L678.0,639.1 L684.5,633.2 L688.7,638.6 L687.5,649.3 L690.5,657.6 L695.2,660.6 L694.7,665.9 L689.9,670.1 L675.6,674.2 L672.6,680.2 L676.2,683.2 L670.9,687.9 L664.3,687.3 L664.9,676.6 L653.6,665.3 L661.3,662.3 L665.5,655.8Z" fill="#5cb836" stroke="#42ae22" stroke-width="2" stroke-linejoin="round"/>
<path d="M632.2,674.2 L639.9,665.9 L650.6,662.9 L653.0,665.3 L664.9,676.6 L664.3,687.3 L667.3,691.5 L657.2,695.1 L648.8,707.5 L628.6,709.3 L626.3,706.4 L627.4,680.2Z" fill="#b36330" stroke="#b4501f" stroke-width="2" stroke-linejoin="round"/>
<path d="M551.2,627.5 L564.8,610.9 L570.2,616.8 L582.1,614.5 L588.0,606.1 L598.7,607.3 L601.1,591.9 L614.2,591.9 L616.0,582.0 L627.7,590.7 L628.5,584.7 L631.9,581.2 L634.9,566.3 L640.8,571.6 L648.6,569.3 L654.5,569.3 L660.4,577.6 L664.0,593.0 L673.5,590.0 L686.0,597.8 L684.8,606.1 L687.8,612.1 L682.5,614.5 L682.0,622.5 L678.3,626.4 L684.8,632.3 L678.0,638.6 L666.1,640.3 L657.2,638.0 L655.4,623.1 L642.3,624.3 L638.7,630.2 L625.7,635.6 L623.3,642.7 L609.0,641.5 L606.6,644.5 L595.3,645.7 L598.3,656.4 L584.0,665.3 L576.9,655.8 L565.0,658.8Z" fill="#d44a2e" stroke="#dc3820" stroke-width="2" stroke-linejoin="round"/>
<path d="M539.3,536.0 L547.0,536.0 L552.3,551.4 L555.9,555.6 L555.3,566.9 L564.2,568.0 L574.9,582.3 L567.8,591.9 L570.2,601.4 L566.6,607.3 L559.5,615.7 L552.3,626.4 L544.6,625.2 L542.2,630.5 L537.5,624.6 L545.2,617.4 L532.7,599.0 L545.8,595.4 L551.2,596.0 L554.7,587.7 L534.5,588.3 L526.8,575.8 L529.7,569.3 L524.4,568.7 L535.7,565.1 L532.7,552.6Z" fill="#d44a2e" stroke="#dc3820" stroke-width="2" stroke-linejoin="round"/>
<path d="M507.7,478.1 L520.8,475.7 L532.1,466.2 L536.9,466.8 L553.5,478.1 L555.9,481.6 L561.9,489.4 L563.0,493.5 L559.5,501.9 L563.0,522.1 L567.8,525.1 L571.4,535.2 L570.2,542.3 L577.3,547.0 L588.6,548.3 L590.4,547.8 L594.6,540.7 L611.8,549.0 L619.0,560.9 L616.0,580.0 L614.2,591.9 L601.1,591.9 L598.7,607.3 L588.0,606.1 L582.1,614.5 L570.2,616.8 L566.6,607.3 L570.2,601.4 L567.8,591.9 L574.9,582.3 L564.2,568.0 L555.3,566.9 L555.9,555.6 L552.3,551.4 L547.0,536.0 L539.3,536.0 L532.1,550.2 L529.7,558.6 L518.4,558.6 L517.2,552.6 L520.8,547.8 L514.9,539.5 L514.3,528.0 L510.7,511.4 L514.9,497.1 L508.9,487.0Z" fill="#d44a2e" stroke="#dc3820" stroke-width="2" stroke-linejoin="round"/>
<path d="M686.6,599.0 L694.4,595.4 L710.4,600.2 L715.2,597.8 L719.3,591.9 L718.7,587.1 L722.3,577.6 L720.5,565.7 L716.4,561.5 L717.0,556.8 L722.3,558.6 L725.9,564.5 L731.8,566.9 L748.5,556.8 L753.2,563.3 L750.3,576.4 L764.5,581.2 L768.1,599.0 L761.6,600.2 L759.8,606.1 L749.1,612.7 L748.5,617.4 L718.3,645.3 L704.0,651.3 L701.0,660.8 L692.1,657.8 L687.4,648.3 L689.7,638.8 L685.0,632.8 L679.0,625.7 L683.0,621.0 L686.2,613.5 L684.4,605.5Z" fill="#b36330" stroke="#b4501f" stroke-width="2" stroke-linejoin="round"/>
<path d="M714.0,598.5 L721.0,594.2 L727.0,598.4 L726.5,602.6 L720.0,604.4Z" fill="#e9ecdf" stroke="#b4501f" stroke-width="1" stroke-linejoin="round"/>
<path d="M629.5,489.5 L634.3,484.1 L643.8,485.9 L655.7,481.2 L668.8,492.5 L690.2,494.8 L698.5,496.0 L704.5,507.3 L702.1,510.9 L698.5,518.6 L701.5,525.2 L700.9,540.0 L702.1,545.5 L708.0,550.2 L711.6,564.5 L716.0,561.5 L720.5,565.7 L722.3,577.6 L718.7,587.1 L719.3,591.9 L710.4,599.6 L694.4,594.8 L686.0,597.8 L673.5,590.0 L664.0,593.0 L660.4,577.6 L654.5,569.3 L648.6,569.3 L649.7,547.8 L641.4,538.3 L652.1,528.7 L648.6,520.4 L641.4,516.8 L645.0,509.7 L646.8,502.6 L642.0,499.0 L634.3,500.2Z" fill="#d44a2e" stroke="#dc3820" stroke-width="2" stroke-linejoin="round"/>
<path d="M704.5,507.3 L711.6,509.1 L718.7,501.4 L727.1,504.4 L732.4,502.0 L731.8,494.8 L737.8,490.7 L742.5,496.0 L749.1,494.2 L750.9,485.9 L747.9,482.9 L750.9,481.2 L758.0,487.1 L768.7,487.7 L769.9,496.6 L781.5,508.5 L779.1,524.0 L787.4,535.9 L791.6,534.7 L792.8,526.4 L797.0,522.8 L811.8,526.4 L820.2,534.1 L822.5,546.0 L817.0,557.0 L805.0,569.0 L783.0,580.5 L771.7,584.7 L768.7,578.2 L763.9,580.6 L750.9,576.4 L754.4,564.5 L751.5,556.0 L747.9,555.6 L731.8,566.3 L727.7,564.5 L727.7,556.2 L717.0,556.8 L716.4,560.9 L711.6,564.5 L708.0,550.2 L702.1,545.5 L700.9,530.0 L701.5,525.2 L698.5,518.6 L702.1,510.9Z" fill="#d44a2e" stroke="#dc3820" stroke-width="2" stroke-linejoin="round"/>
<path d="M697.3,433.6 L714.0,447.8 L716.5,451.5 L720.9,453.8 L726.3,452.0 L729.4,448.4 L737.8,454.4 L744.3,471.6 L752.6,471.0 L756.2,482.3 L751.5,485.3 L749.1,482.3 L747.9,487.0 L739.5,488.5 L737.8,490.7 L731.8,494.8 L732.4,501.4 L727.1,503.2 L718.7,500.2 L711.6,508.5 L704.5,507.3 L698.5,496.0 L690.2,497.8 L678.3,493.0 L683.6,478.8 L679.5,466.9 L683.6,447.8 L690.2,444.3 L693.8,441.3Z" fill="#968030" stroke="#8a6d1c" stroke-width="2" stroke-linejoin="round"/>
<path d="M817.8,425.5 L829.1,465.7 L827.9,494.8 L825.5,498.4 L827.3,507.3 L823.1,531.1 L820.2,534.1 L811.8,526.4 L797.0,522.8 L792.8,526.4 L791.6,534.7 L787.4,535.9 L779.1,524.0 L780.9,508.5 L770.8,497.8 L769.0,478.8 L755.9,478.8 L753.5,471.6 L761.9,462.1 L762.5,455.0 L776.1,449.0 L791.6,444.9 L808.3,452.6 L809.4,439.5 L807.7,437.1 L813.0,430.0Z" fill="#b36330" stroke="#b4501f" stroke-width="2" stroke-linejoin="round"/>
<path d="M709.6,395.8 L715.6,396.4 L723.9,402.9 L734.0,401.7 L735.2,402.3 L726.9,412.5 L728.0,417.8 L735.2,420.2 L742.3,433.3 L753.0,438.0 L750.7,446.4 L754.8,451.0 L750.3,457.4 L752.0,468.0 L744.3,471.6 L737.8,454.4 L729.4,448.4 L728.2,449.5 L724.7,440.2 L718.2,444.0 L714.6,447.5 L693.5,436.5 L696.0,431.0 L701.3,426.1 L703.1,421.4 L700.1,420.2 L697.1,408.3 L705.5,405.9 L707.8,402.3Z" fill="#7a9c32" stroke="#689322" stroke-width="2" stroke-linejoin="round"/>
<path d="M762.6,360.7 L781.6,381.5 L791.7,386.3 L792.3,391.6 L800.6,398.8 L816.7,424.4 L809.0,438.0 L807.8,446.4 L791.1,439.2 L781.6,441.0 L776.8,448.7 L762.6,453.5 L765.0,457.0 L754.8,450.5 L751.9,446.4 L757.8,441.6 L757.2,435.7 L753.0,438.0 L742.3,433.3 L735.2,420.2 L728.0,417.8 L726.9,412.5 L735.2,402.3 L737.6,397.0 L735.2,389.3 L737.6,380.9 L745.3,379.7 L751.9,370.2 L760.2,367.8 L761.4,359.5Z" fill="#7a9c32" stroke="#689322" stroke-width="2" stroke-linejoin="round"/>
<path d="M695.1,279.6 L702.8,277.8 L724.8,293.9 L743.3,313.5 L764.7,348.6 L761.4,356.4 L760.2,367.8 L751.9,370.2 L745.3,379.7 L737.6,380.9 L735.2,389.3 L737.6,397.0 L734.0,401.7 L723.9,402.9 L715.6,396.4 L713.0,391.0 L711.8,385.1 L707.7,380.0 L697.1,383.9 L694.0,378.6 L685.7,367.8 L689.7,362.3 L702.6,361.1 L701.6,354.0 L695.7,354.0 L688.0,347.4 L680.8,346.2 L679.0,343.3 L671.9,344.5 L665.4,330.2 L668.9,315.9 L683.2,314.7 L697.5,316.5 L698.1,301.6 L694.5,296.9 L696.9,286.2Z" fill="#968030" stroke="#8a6d1c" stroke-width="2" stroke-linejoin="round"/>
<path d="M623.9,298.3 L642.3,287.6 L666.7,286.4 L681.6,273.1 L686.5,272.5 L695.5,282.5 L693.0,298.4 L698.0,302.0 L697.5,316.0 L683.5,315.5 L669.5,315.0 L664.9,330.2 L650.6,340.9 L646.5,352.8 L649.4,358.7 L645.8,353.6 L651.2,359.5 L645.2,361.3 L645.8,369.6 L628.6,378.6 L617.8,375.6 L615.5,359.5 L616.1,352.8 L623.3,343.3 L620.9,331.4 L627.4,326.6 L625.7,317.1 L622.1,311.2 L626.5,306.0Z" fill="#968030" stroke="#8a6d1c" stroke-width="2" stroke-linejoin="round"/>
<path d="M664.9,330.8 L672.0,344.5 L679.2,343.9 L680.4,346.2 L688.7,347.4 L695.7,354.0 L701.6,354.0 L702.6,361.1 L689.7,362.3 L685.7,367.8 L694.0,378.6 L696.4,384.5 L707.7,382.7 L711.8,385.1 L713.0,391.0 L704.7,397.6 L707.7,401.2 L704.7,405.3 L696.4,407.1 L699.3,420.2 L702.3,421.4 L698.7,426.1 L696.4,429.1 L692.8,437.4 L683.3,429.7 L677.3,437.4 L671.4,434.5 L669.0,426.1 L670.2,422.6 L669.0,417.2 L679.1,404.7 L679.1,397.6 L674.9,392.2 L664.8,394.0 L662.5,385.7 L667.8,380.9 L661.9,371.4 L658.3,360.1 L651.2,359.5 L645.8,353.6 L649.4,358.7 L646.5,352.8 L650.6,340.9Z" fill="#b36330" stroke="#b4501f" stroke-width="2" stroke-linejoin="round"/>
<path d="M670.2,365.8 L672.5,368.1 L670.2,370.4 L667.9,368.1Z" fill="#e9ecdf" stroke="#b4501f" stroke-width="1" stroke-linejoin="round"/>
<path d="M683.3,398.3 L685.6,400.6 L683.3,402.9 L681.0,400.6Z" fill="#e9ecdf" stroke="#b4501f" stroke-width="1" stroke-linejoin="round"/>
<path d="M564.4,340.9 L579.9,325.7 L581.0,327.8 L585.2,326.6 L591.2,329.0 L593.5,321.3 L603.0,317.7 L604.8,311.7 L611.4,311.2 L612.6,304.0 L615.0,305.2 L620.9,302.6 L626.2,306.4 L622.1,311.2 L625.7,317.1 L627.4,326.6 L620.9,331.4 L623.3,343.3 L616.1,352.8 L619.1,359.3 L604.2,354.6 L592.9,362.3 L588.8,355.2 L578.1,354.0Z" fill="#d44a2e" stroke="#dc3820" stroke-width="2" stroke-linejoin="round"/>
<path d="M583.3,546.5 L590.4,547.8 L589.8,555.0 L583.3,555.0Z" fill="#a5561f" stroke="#a5561f" stroke-width="2" stroke-linejoin="round"/>
<path d="M588.6,472.7 L595.2,465.0 L604.7,468.0 L608.3,479.3 L604.7,490.0 L602.3,509.0 L604.7,517.3 L596.4,523.3 L598.1,530.4 L592.8,534.0 L593.4,543.5 L588.6,548.3 L571.4,542.3 L571.4,535.2 L567.8,525.1 L563.0,522.1 L559.5,501.9 L563.0,493.5 L564.2,491.2 L574.4,490.0 L576.1,481.6 L581.5,482.2 L582.1,488.8 L589.2,487.6 L588.6,479.3 L585.7,475.7Z" fill="#b36330" stroke="#b4501f" stroke-width="2" stroke-linejoin="round"/>
<path d="M588.6,503.6 L590.4,505.4 L588.6,507.2 L586.8,505.4Z" fill="#e9ecdf" stroke="#b4501f" stroke-width="1" stroke-linejoin="round"/>
<path d="M587.5,514.5 L591.0,515.5 L590.0,520.0 L586.5,519.0Z" fill="#e9ecdf" stroke="#b4501f" stroke-width="1" stroke-linejoin="round"/>
<path d="M584.5,528.0 L588.0,530.5 L585.5,534.0 L582.0,531.5Z" fill="#e9ecdf" stroke="#b4501f" stroke-width="1" stroke-linejoin="round"/>
<path d="M555.9,478.7 L564.8,472.1 L564.2,463.2 L571.4,459.0 L576.1,460.8 L575.5,457.8 L582.1,453.7 L584.5,457.8 L588.6,459.0 L586.8,467.4 L585.7,475.7 L588.6,479.3 L589.2,487.6 L582.1,488.8 L581.5,482.2 L576.1,481.6 L574.4,490.0 L564.2,491.2 L561.9,488.8Z" fill="#968030" stroke="#8a6d1c" stroke-width="2" stroke-linejoin="round"/>
<path d="M577.8,466.5 L580.3,466.5 L580.8,471.0 L577.6,471.0Z" fill="#e9ecdf" stroke="#8a6d1c" stroke-width="1" stroke-linejoin="round"/>
<path d="M691.4,445.5 C693.4,447.9 698.8,454.9 703.3,459.7 C707.8,464.4 714.8,471.0 718.7,474.0 C722.7,477.0 723.6,477.0 727.0,477.6 C730.4,478.2 735.0,478.4 739.0,477.6 C743.0,476.8 747.2,475.4 750.9,472.8 C754.6,470.2 754.5,465.5 761.0,462.0 C767.5,458.5 782.2,453.2 790.0,452.0 C797.8,450.8 802.5,455.5 808.0,455.0 C813.5,454.5 820.5,450.0 823.0,449.0" fill="none" stroke="#ffffff" stroke-opacity="0.06" stroke-width="3.2" stroke-linecap="round" clip-path="url(#polyclip)"/>
<path d="M583.3,555.0 C585.1,556.8 590.0,561.5 594.0,565.7 C598.0,569.9 604.6,576.0 607.0,580.0 C609.4,584.0 609.3,586.7 608.3,589.5 C607.3,592.3 605.2,593.6 601.0,596.6 C596.8,599.6 588.2,605.1 583.3,607.3 C578.4,609.5 575.3,607.6 571.4,609.7 C567.5,611.8 561.9,618.3 560.0,620.0" fill="none" stroke="#ffffff" stroke-opacity="0.06" stroke-width="3.2" stroke-linecap="round" clip-path="url(#polyclip)"/>
<path d="M604.7,503.0 C606.3,503.4 610.8,504.0 614.2,505.4 C617.6,506.8 621.2,511.2 625.0,511.4 C628.8,511.6 633.7,507.9 636.8,506.6 C639.9,505.3 640.0,503.7 643.8,503.8 C647.5,503.9 655.3,507.3 659.3,507.3 C663.3,507.3 665.6,505.6 667.6,503.8 C669.6,502.0 670.4,497.8 671.0,496.6" fill="none" stroke="#ffffff" stroke-opacity="0.06" stroke-width="3.2" stroke-linecap="round" clip-path="url(#polyclip)"/>
<path d="M576.0,520.0 C577.2,522.5 581.8,529.2 583.0,535.0 C584.2,540.8 583.2,551.7 583.3,555.0" fill="none" stroke="#ffffff" stroke-opacity="0.06" stroke-width="3.2" stroke-linecap="round" clip-path="url(#polyclip)"/>
<path d="M622.6,719.0 C624.8,716.2 630.3,707.9 635.8,702.4 C641.3,696.9 649.5,689.9 655.5,686.0 C661.5,682.1 669.2,680.2 672.0,679.0" fill="none" stroke="#ffffff" stroke-opacity="0.06" stroke-width="3.2" stroke-linecap="round" clip-path="url(#polyclip)"/>
<path d="M547.6,389.7 L559.5,392.1 L564.8,400.4 L573.8,404.0 L580.9,415.3 L566.0,422.5 L570.2,430.2 L577.3,435.5 L591.6,436.1 L602.3,437.3" fill="none" stroke="#fd2820" stroke-width="2.4" stroke-linejoin="round"/>
<path d="M624.3,379.6 L622.5,390.9 L616.0,395.7 L620.2,404.0 L619.0,412.3 L607.1,418.9 L598.1,411.7 L594.0,420.7 L601.7,431.4 L604.7,436.1 L602.3,437.9 L597.5,440.9 L604.7,448.0 L620.2,445.1 L627.3,454.0 L628.5,466.2 L636.8,478.1 L631.0,488.0" fill="none" stroke="#fd2820" stroke-width="2.4" stroke-linejoin="round"/>
<path d="M604.7,448.0 L609.4,459.0 L601.1,466.0" fill="none" stroke="#fd2820" stroke-width="2.4" stroke-linejoin="round"/>
<path d="M929.8,82.0 C929.1,84.8 928.1,94.4 925.6,99.0 C923.1,103.6 921.1,104.8 915.0,109.8 C908.9,114.8 894.7,123.3 889.0,129.0 C883.3,134.7 883.7,136.5 880.9,143.9 C878.1,151.3 875.5,165.2 872.0,173.7 C868.5,182.2 864.5,187.6 859.6,195.0 C854.7,202.4 846.9,213.2 842.6,218.0 C838.3,222.8 837.9,222.7 834.0,224.0 C830.1,225.3 824.7,223.3 819.0,225.6 C813.3,227.9 805.6,233.9 800.0,238.0 C794.4,242.1 791.2,245.7 785.5,250.0 C779.8,254.3 774.6,258.8 766.0,263.6 C757.4,268.4 745.0,276.1 733.7,278.6 C722.4,281.1 708.5,278.9 698.0,278.6 C687.5,278.3 678.2,277.1 671.0,276.7 C663.8,276.3 658.6,276.3 655.0,276.5 C651.4,276.7 651.0,277.1 649.5,277.8 C648.0,278.5 646.8,279.5 645.8,280.5 C644.8,281.5 645.9,280.9 643.7,284.0 C641.5,287.1 638.2,293.8 632.7,299.0 C627.2,304.2 621.5,309.2 611.0,315.5 C600.5,321.8 578.7,332.0 570.0,337.0 C561.3,342.0 561.3,341.8 559.0,345.5 C556.7,349.2 556.2,349.9 556.0,359.0 C555.8,368.1 558.4,389.1 557.7,400.0 C557.0,410.9 554.0,417.8 552.0,424.6 C550.0,431.4 547.3,434.2 545.5,441.0 C543.7,447.8 543.3,459.2 541.0,465.5 C538.7,471.8 536.5,474.8 531.8,479.0 C527.1,483.2 519.5,485.6 512.9,490.7 C506.3,495.8 497.8,505.4 492.0,509.7 C486.2,514.0 482.6,515.2 478.0,516.6 C473.4,518.0 471.4,518.6 464.5,518.0 C457.6,517.4 447.8,515.5 436.8,513.0 C425.8,510.5 411.4,505.5 398.7,502.8 C386.0,500.1 374.0,495.0 360.7,497.0 C347.4,499.0 331.7,509.4 319.0,515.0 C306.3,520.6 295.3,526.1 284.6,530.5 C273.9,534.9 280.8,530.2 255.0,541.5 C229.2,552.8 169.5,581.0 130.0,598.0 C90.5,615.0 40.3,634.7 18.0,643.5 C-4.3,652.3 -0.3,649.8 -4.0,651.0" fill="none" stroke="#4a3050" stroke-opacity="0.14" stroke-width="3" stroke-dasharray="11,4,3,4" stroke-linejoin="round" clip-path="url(#polyclip)"/>
</svg>
<!-- hidden-behind-panel left controls -->
<div class="cbtn" style="left:7px;top:652px;width:28px;height:28px;background:#e3e5dc;box-shadow:0 1px 3px rgba(0,0,0,.3)"><svg width="28" height="28" viewBox="0 0 28 28"><g fill="none" stroke="#8a8c86" stroke-width="1.400"><path d="M8,11 V8 H11 M8,17 V20 H11 M17,8 H20 V11 M20,17 V20 H17"/><path d="M14,10 V18 M12,12 L14,10 L16,12"/></g></svg></div>
<div class="cbtn" style="left:7px;top:697.400px;width:28px;height:28px"><svg width="28" height="28" viewBox="0 0 28 28"><g fill="none" stroke="#222" stroke-width="1.800"><path d="M8.500,11 V8 H11.500 M8.500,17 V20 H11.500"/></g><rect x="13" y="10" width="7" height="8" fill="none" stroke="#222" stroke-width="2"/></svg></div>
<div class="abs" style="left:6.500px;top:741.500px;width:30px;height:30.500px;background:#d6d8cf;border-radius:3px"></div>
<svg class="abs" style="left:12px;top:743px" width="24" height="28" viewBox="0 0 24 28"><path d="M5,12 L7.500,24 H17 L19,13 V6.500 M8.500,13 V4.500 M12,12.500 V3 M15.500,12.500 V4 M5,12 L3.500,9.500" fill="none" stroke="#1a1a1a" stroke-width="2" stroke-linecap="round" stroke-linejoin="round"/></svg>

<!-- dark bottom drawer -->
<div class="abs" style="left:0;top:921px;width:1393px;height:4px;background:linear-gradient(180deg,#b9bbb6 0,#cdcfcb 60%,#cdcfcb 100%)"></div>
<div class="abs" style="left:208px;top:922.700px;width:32px;height:3px;background:#b6baa6"></div><div class="abs" style="left:240px;top:922.700px;width:66px;height:3px;background:#0d232a"></div>
<div class="abs" style="left:0;top:757px;width:1393px;height:164.700px;background:rgba(0,0,0,.6);border-bottom-left-radius:7px;border-bottom-right-radius:6px"></div>
<div class="abs" style="left:50px;top:812px;width:160px;height:110px;background:radial-gradient(ellipse 80px 52px at 50% 62%,rgba(150,200,235,.24) 0,rgba(150,200,235,.13) 45%,rgba(150,200,235,0) 100%)"></div>
<!-- drag handle -->
<svg class="abs" style="left:664px;top:761px" width="14" height="9" viewBox="0 0 14 9"><g fill="#fff"><circle cx="2.500" cy="2.200" r="1.300"/><circle cx="7" cy="2.200" r="1.300"/><circle cx="11.500" cy="2.200" r="1.300"/><circle cx="2.500" cy="6.600" r="1.300"/><circle cx="7" cy="6.600" r="1.300"/><circle cx="11.500" cy="6.600" r="1.300"/></g></svg>
<!-- zoom control (under overlay look) -->
<div class="abs" style="left:8px;top:808px;width:26px;height:78px;background:#70736c;border-radius:4px;box-shadow:0 0 2px rgba(0,0,0,.35)">
  <div class="abs" style="left:0;top:25.500px;width:26px;height:1px;background:#5a5c56"></div>
  <div class="abs" style="left:0;top:52px;width:26px;height:1px;background:#5a5c56"></div>
  <svg class="abs" style="left:0;top:0" width="26" height="78" viewBox="0 0 26 78"><path d="M7.500,13 H18.500 M13,7.500 V18.500 M7.500,39 H18.500" stroke="#111" stroke-width="2.200" fill="none"/><path d="M13,60 L16,66.500 H10 Z" fill="#222"/><path d="M13,74 L16,67.500 H10 Z" fill="#555852"/></svg>
</div>
<div class="abs" style="left:8px;top:895px;width:49px;height:19px;background:rgba(255,255,255,.09);border:1px solid #1c1c1c;border-top:none;font-size:9.500px;line-height:18px;color:#222;padding-left:6px">100 m</div>
<!-- simple mode button (mostly hidden) -->
<div class="abs" style="left:84.500px;top:850px;width:92px;height:32.500px;border-radius:12px;background:#0b0b0b;border:3px solid #2ea3f2;box-shadow:0 0 8px rgba(46,163,242,.55)"></div>
<div class="abs" style="left:100px;top:884px;width:62px;text-align:center;font-size:10.700px;font-weight:700;line-height:14px;color:#ff8c1a;white-space:nowrap">簡易表示中</div>
<!-- center buttons -->
<div class="abs" style="left:656px;top:861px;width:85px;height:40px;border-radius:9px;background:#666664;box-shadow:0 1px 4px rgba(0,0,0,.3)"></div>
<div class="abs" style="left:662.500px;top:866px;width:29px;height:29px;border-radius:50%;background:#6b6b6a;box-shadow:0 1px 2px rgba(0,0,0,.55)"><svg width="29" height="29" viewBox="0 0 29 29"><g stroke="#1b1b1b" stroke-width="1.200"><rect x="5.800" y="5.800" width="12.600" height="10.300" fill="#6b6b6a"/><rect x="9" y="9.400" width="12.200" height="9.800" fill="#7c7c7b"/><rect x="11.900" y="12.600" width="12.400" height="9.700" fill="#6e6e6d"/></g><path d="M12.500,21.700 V19.500 L14.200,17.600 L15.300,19 L17.300,15.800 L18.700,17.800 L20.300,15.500 L23.700,20 V21.700 Z" fill="#1b1b1b"/></svg></div>
<div class="abs" style="left:703.500px;top:866px;width:29px;height:29px;border-radius:50%;background:#1f4f6f;box-shadow:0 1px 2px rgba(0,0,0,.55)"><svg width="29" height="29" viewBox="0 0 29 29"><g fill="none" stroke="#587e96" stroke-width="1.200" stroke-linejoin="round"><path d="M14.500,6.300 L22.500,10.500 L14.500,14.700 L6.500,10.500 Z"/><path d="M14.500,10.300 L22.500,14.500 L14.500,18.700 L6.500,14.500 Z"/><path d="M14.500,14.300 L22.500,18.500 L14.500,22.700 L6.500,18.500 Z"/></g></svg></div>
<!-- coordinate panel -->
<div class="abs" style="left:1202px;top:796px;width:185px;height:99.500px;border-radius:4px;background:#6a6b69;box-shadow:0 1px 3px rgba(0,0,0,.35);color:#1e1e1e;font-size:11.600px;overflow:hidden"><div class="abs" style="left:0;top:1px;width:185px;height:98px">
  <div class="abs" style="left:7px;top:7px;line-height:16px">地理座標系</div>
  <div class="abs" style="left:7px;top:27px;width:171px;height:1px;background:#2f2f2f"></div>
  <div class="abs" style="left:43px;top:35px;line-height:16px">緯度</div>
  <div class="abs" style="left:43px;top:52px;line-height:16px">経度</div>
  <div class="abs" style="left:43px;top:69px;line-height:16px">標高</div>
  <div class="abs" style="left:72px;top:78px;width:0;height:0;border-left:4px solid transparent;border-right:4px solid transparent;border-top:4px solid #2a2a2a"></div>
  <div class="abs" style="left:43px;top:89px;width:43px;height:1px;background:#2f2f2f"></div>
  <div class="abs" style="left:122px;top:35px;width:56px;height:16px;overflow:hidden"><div style="position:absolute;right:0;top:0;line-height:16px;white-space:nowrap;font-size:12.500px">33.014723° N</div></div>
  <div class="abs" style="left:122px;top:52px;width:56px;height:16px;overflow:hidden"><div style="position:absolute;right:0;top:0;line-height:16px;white-space:nowrap;font-size:12.500px">131.057709° E</div></div>
  <div class="abs" style="left:122px;top:68px;width:56px;height:14px;overflow:hidden"><div style="position:absolute;right:0;top:0;line-height:14px;white-space:nowrap;font-size:12.500px">742.30 m</div></div>
  <div class="abs" style="left:122px;top:79px;width:56px;height:14px;overflow:hidden"><div style="position:absolute;right:0;top:0;line-height:14px;white-space:nowrap;font-size:11px">(GSIGEO)</div></div>
</div></div>
<!-- attribution -->
<div class="abs" style="left:1088px;top:906px;width:305px;height:16px;background:rgba(255,255,255,.07);font-size:10.900px;line-height:16px;color:#1d1d1d;padding-left:5px;white-space:nowrap">© SkymatiX | © OpenMapTiles © OpenStreetMap contributors</div>
<!-- right floating buttons -->
<div class="abs" style="left:1340px;top:765px;width:36px;height:36px;border-radius:50%;background:#000;box-shadow:0 2px 4px rgba(0,0,0,.4)"><svg width="36" height="36" viewBox="0 0 36 36"><path d="M12.500,12.500 L23.500,23.500 M23.500,12.500 L12.500,23.500" stroke="#fff" stroke-width="2" fill="none"/></svg></div>
<div class="abs" style="left:1340px;top:808px;width:36px;height:36px;border-radius:50%;background:#000;box-shadow:0 2px 4px rgba(0,0,0,.4)"><svg width="36" height="36" viewBox="0 0 36 36"><path d="M18,11 C12.500,11 9,15 8,18 C9,21 12.500,25 18,25 C23.500,25 27,21 28,18 C27,15 23.500,11 18,11 Z" fill="#fff"/><circle cx="18" cy="18" r="4.300" fill="#000"/><circle cx="18" cy="18" r="2.300" fill="#fff"/></svg></div>
<div class="abs" style="left:1333.500px;top:859.500px;width:42px;height:42px;border-radius:50%;background:#2251a4;box-shadow:0 2px 5px rgba(0,0,0,.45)"><svg width="42" height="42" viewBox="0 0 42 42"><path d="M13,15.500 H29.500 M13,21 H29.500 M13,26.500 H29.500" stroke="#fff" stroke-width="2" fill="none"/></svg></div>

<div id="hdr">
  <!-- logo -->
  <svg class="abs" style="left:20.300px;top:6.600px" width="26.500" height="25.500" viewBox="0 0 30 28.500">
    <g stroke="#fff" stroke-width="2.4" stroke-linejoin="round" fill="#fff">
      <path d="M15,2 L22,6 L22,13 L28,16.5 L28,23 L21.5,26.5 L15,23 L8.5,26.5 L2,23 L2,16.5 L8,13 L8,6 Z"/>
    </g>
    <path d="M15,2 L22,6 L15,10 L8,6 Z" fill="#7fd0f5"/>
    <path d="M8,6 L15,10 L15,17 L8,13 Z" fill="#2f8fdc"/>
    <path d="M22,6 L15,10 L15,17 L22,13 Z" fill="#1d6fc4"/>
    <path d="M8,13 L15,17 L8.5,20 L2,16.5 Z" fill="#6cc4f2"/>
    <path d="M2,16.5 L8.5,20 L8.5,26.5 L2,23 Z" fill="#2f8fdc"/>
    <path d="M15,17 L8.5,20 L8.5,26.5 L15,23 Z" fill="#1a62b5"/>
    <path d="M22,13 L28,16.5 L21.5,20 L15,17 Z" fill="#6cc4f2"/>
    <path d="M15,17 L21.5,20 L21.5,26.5 L15,23 Z" fill="#2f8fdc"/>
    <path d="M28,16.5 L21.5,20 L21.5,26.5 L28,23 Z" fill="#1a62b5"/>
  </svg>
  <svg class="abs" style="left:46px;top:6px" width="88" height="28" viewBox="0 0 88 28">
    <text x="5.600" y="21.300" font-family="Liberation Sans, sans-serif" font-weight="700" font-size="18.600" fill="#fff" stroke="#fff" stroke-width="3.800" stroke-linejoin="round" textLength="75.500" lengthAdjust="spacingAndGlyphs">KUMIKI</text>
    <text x="5.600" y="21.300" font-family="Liberation Sans, sans-serif" font-weight="700" font-size="18.600" fill="#0a0a0a" stroke="#0a0a0a" stroke-width="0.900" stroke-linejoin="round" textLength="75.500" lengthAdjust="spacingAndGlyphs">KUMIKI</text>
  </svg>
  <div class="abs" style="left:139px;top:11px;width:1px;height:17px;background:#9fb4da"></div>
  <div id="search">タグ・コメント・タイトルで絞り込み</div>
  <!-- share -->
  <svg class="abs" style="left:886px;top:11px" width="16" height="16" viewBox="0 0 24 24"><path fill="#fff" d="M18 16.08c-.76 0-1.44.3-1.96.77L8.91 12.7c.05-.23.09-.46.09-.7s-.04-.47-.09-.7l7.05-4.11c.54.5 1.250.81 2.040.81 1.660 0 3-1.340 3-3s-1.340-3-3-3-3 1.340-3 3c0 .24.040.47.090.7L8.040 9.810C7.500 9.310 6.790 9 6 9c-1.660 0-3 1.340-3 3s1.340 3 3 3c.79 0 1.500-.31 2.040-.81l7.120 4.160c-.05.21-.08.43-.08.65 0 1.610 1.310 2.920 2.920 2.920s2.920-1.310 2.920-2.920-1.310-2.920-2.920-2.920z"/></svg>
  <div class="t" style="left:908px">連携サービスの紹介</div>
  <!-- progress ring icon -->
  <svg class="abs" style="left:1026px;top:10px" width="18" height="18" viewBox="0 0 18 18"><g fill="none" stroke="#fff" stroke-width="1.6"><circle cx="9" cy="9" r="5.2" stroke-width="2.4" stroke-dasharray="2.6,1.5"/></g><g fill="#fff"><circle cx="9" cy="2.2" r="1.7"/><circle cx="14.9" cy="5.6" r="1.7"/><circle cx="14.9" cy="12.4" r="1.7"/><circle cx="9" cy="15.8" r="1.7"/><circle cx="3.1" cy="12.4" r="1.7"/><circle cx="3.1" cy="5.600" r="1.700"/></g></svg>
  <div class="t" style="left:1049px">処理状況</div>
  <!-- bell -->
  <svg class="abs" style="left:1115px;top:11px" width="16" height="17" viewBox="0 0 24 24"><path fill="#fff" d="M12 22c1.100 0 2-.900 2-2h-4c0 1.100.900 2 2 2zm6-6v-5c0-3.070-1.630-5.640-4.500-6.320V4c0-.83-.67-1.500-1.500-1.500s-1.500.67-1.500 1.500v.68C7.640 5.360 6 7.920 6 11v5l-2 2v1h16v-1l-2-2zm-2 1H8v-6c0-2.480 1.510-4.500 4-4.500s4 2.020 4 4.500v6z"/></svg>
  <div class="t" style="left:1136px">通知</div>
  <div class="abs" style="left:1143.500px;top:1px;width:30px;height:16px;border-radius:8px;background:#e5343b;color:#fff;font-size:11.5px;font-weight:700;line-height:16px;text-align:center;letter-spacing:.2px">20+</div>
  <!-- speaker -->
  <svg class="abs" style="left:1179px;top:11px" width="17" height="17" viewBox="0 0 24 24"><path fill="#fff" d="M3 9v6h4l5 5V4L7 9H3zm13.500 3c0-1.770-1.020-3.290-2.500-4.030v8.050c1.480-.730 2.500-2.250 2.500-4.020zM14 3.230v2.060c2.890.860 5 3.540 5 6.710s-2.110 5.850-5 6.710v2.060c4.010-.910 7-4.490 7-8.770s-2.990-7.860-7-8.770z"/></svg>
  <div class="t" style="left:1202px">ニュース</div>
  <!-- help -->
  <svg class="abs" style="left:1265px;top:11px" width="17" height="17" viewBox="0 0 24 24"><path fill="#fff" d="M11 18h2v-2h-2v2zm1-16C6.480 2 2 6.480 2 12s4.480 10 10 10 10-4.480 10-10S17.520 2 12 2zm0 18c-4.410 0-8-3.590-8-8s3.590-8 8-8 8 3.590 8 8-3.590 8-8 8zm0-14c-2.210 0-4 1.790-4 4h2c0-1.100.9-2 2-2s2 .9 2 2c0 2-3 1.750-3 5h2c0-2.250 3-2.500 3-5 0-2.210-1.790-4-4-4z"/></svg>
  <div class="t" style="left:1288px">ヘルプ</div>
  <!-- avatar -->
  <svg class="abs" style="left:1337px;top:3px" width="32" height="32" viewBox="0 0 32 32"><defs><clipPath id="avc"><circle cx="16" cy="16" r="15.500"/></clipPath></defs><circle cx="16" cy="16" r="15.500" fill="#f4f4f4"/><g clip-path="url(#avc)" fill="none" stroke="#555" stroke-width="2.600"><circle cx="16" cy="12.500" r="6.200"/><path d="M3.500,33 C3.500,24 9,20.500 16,20.500 C23,20.500 28.500,24 28.500,33"/></g></svg>
</div>
<div id="nav">
  <div id="org">くみき開発</div>
  <div class="tab" style="left:251px"><svg style="position:absolute;left:67px;top:14px" width="16" height="14" viewBox="0 0 16 14"><path d="M1,1.700 L6,1.700 L7.600,3.400 L15,3.400 L15,12.700 L1,12.700 Z" fill="none" stroke="#555" stroke-width="1.400" stroke-linejoin="round"/></svg><span style="position:absolute;left:88px;top:0">プロジェクト</span></div>
  <div class="tab" style="left:473px"><svg style="position:absolute;left:72px;top:14px" width="15" height="15" viewBox="0 0 15 15"><g fill="none" stroke="#555" stroke-width="1.400"><rect x="1" y="1" width="5" height="5"/><rect x="9" y="1" width="5" height="5"/><rect x="1" y="9" width="5" height="5"/><rect x="9" y="9" width="5" height="5"/></g></svg><span style="position:absolute;left:93px;top:0">ギャラリー</span></div>
  <div class="tab" style="left:695px"><svg style="position:absolute;left:61px;top:14px" width="16" height="15" viewBox="0 0 16 15"><path d="M0.500,1 H15.500 V11.500 H10.500 L11.500,14.200 H4.500 L5.500,11.500 H0.500 Z" fill="#555"/></svg><span style="position:absolute;left:82px;top:0">ダッシュボード</span></div>
  <div id="upload"><svg style="position:absolute;left:36px;top:6px" width="19" height="18" viewBox="0 0 24 24"><path fill="#fff" d="M19.350 10.040C18.670 6.590 15.640 4 12 4 9.110 4 6.600 5.640 5.350 8.040 2.340 8.360 0 10.910 0 14c0 3.310 2.690 6 6 6h13c2.760 0 5-2.240 5-5 0-2.640-2.050-4.780-4.650-4.960zM14 13v4h-4v-4H7l5-5 5 5h-3z"/></svg><span style="position:absolute;left:60px;top:0">アップロード</span></div>
  <div class="abs" style="left:1353.700px;top:8.600px;width:25px;height:25px;border:1px solid #c9c9c9;border-radius:50%;background:#fff"><svg style="position:absolute;left:6px;top:7px" width="11" height="9" viewBox="0 0 11 9"><path d="M1.500,6.500 L5.500,2.500 L9.500,6.500" fill="none" stroke="#444" stroke-width="1.500"/></svg></div>
</div>

<!-- left chevron tab -->
<div class="abs" style="left:0;top:83px;width:34px;height:36.500px;background:#fff;border-right:1px solid #ddd;border-bottom:1px solid #ddd"><svg style="position:absolute;left:11px;top:10px" width="10" height="14" viewBox="0 0 10 14"><path d="M2.500,2 L7.500,7 L2.500,12" fill="none" stroke="#555" stroke-width="1.500"/></svg></div>
<!-- toolbar circles -->
<div class="cbtn" style="left:45.75px;top:97.750px;width:28.500px;height:28.500px"><svg style="left:-0.750px;top:-0.750px" width="30" height="30" viewBox="0 0 30 30"><path d="M9,17.500 H18.500 A4.200,4.200 0 0 0 18.500,9 H11.500 M12.500,13.800 L8.500,17.500 L12.500,21.200" fill="none" stroke="#222" stroke-width="1.700" stroke-linecap="round" stroke-linejoin="round"/></svg></div>
<div class="cbtn" style="left:99.75px;top:97.750px;width:28.500px;height:28.500px;background:#35a9ee"><svg style="left:-0.750px;top:-0.750px" width="30" height="30" viewBox="0 0 30 30"><g fill="#fff"><circle cx="15" cy="9" r="2"/><circle cx="15" cy="15" r="2"/><circle cx="15" cy="21" r="2"/></g></svg></div>
<div class="cbtn" style="left:139.55px;top:97.750px;width:28.500px;height:28.500px"><svg style="left:-0.750px;top:-0.750px" width="30" height="30" viewBox="0 0 30 30"><g fill="none" stroke="#222" stroke-width="1.700" stroke-linejoin="round"><rect x="7.500" y="10.500" width="15" height="8.500"/><path d="M10.800,10.500 V14.200 M14,10.500 V14.200 M17.200,10.500 V14.200 M20,10.500 V14.200"/></g></svg></div>
<div class="cbtn" style="left:179.25px;top:97.750px;width:28.500px;height:28.500px"><svg style="left:-0.750px;top:-0.750px" width="30" height="30" viewBox="0 0 30 30"><path d="M15,7.500 L23,13.400 L20,22.500 L10,22.500 L7,13.400 Z" fill="none" stroke="#222" stroke-width="1.700" stroke-linejoin="round"/></svg></div>
<div class="cbtn" style="left:218.85px;top:97.750px;width:28.500px;height:28.500px"><svg style="left:-0.750px;top:-0.750px" width="30" height="30" viewBox="0 0 30 30"><g fill="none" stroke="#222" stroke-width="1.500" stroke-linejoin="round"><path d="M15,6.500 L7.500,20 Q15,25.500 22.500,20 Z"/><path d="M15,6.500 L12.500,22.800 M15,6.500 L17.500,22.800"/></g></svg></div>
<div class="cbtn" style="left:258.35px;top:97.750px;width:28.500px;height:28.500px"><svg style="left:-0.750px;top:-0.750px" width="30" height="30" viewBox="0 0 30 30"><g fill="none" stroke="#222" stroke-width="1.600" stroke-linejoin="round" stroke-linecap="round"><path d="M5,16.500 L9.500,11 L12.500,14.500 L18,7.500 L22,12"/><rect x="11.500" y="16.500" width="12" height="6"/><path d="M14.500,16.500 V19 M17.500,16.500 V19 M20.500,16.500 V19" stroke-width="1.200"/></g></svg></div>
<div class="cbtn" style="left:297.95px;top:97.750px;width:28.500px;height:28.500px"><svg style="left:-0.750px;top:-0.750px" width="30" height="30" viewBox="0 0 30 30"><g fill="none" stroke="#222" stroke-width="1.500"><rect x="7.400" y="8" width="5.600" height="4.800"/><path d="M14.800,13.800 V8 H23.200 V13.800 M19,8 V12.500"/><path d="M13.200,15 H7.400 V21.800 H13.200 M7.400,18.400 H12.800"/></g><rect x="15.800" y="15.600" width="7.400" height="6.800" fill="#222"/></svg></div>
<div class="cbtn" style="left:337.65px;top:97.750px;width:28.500px;height:28.500px"><svg style="left:-0.750px;top:-0.750px" width="30" height="30" viewBox="0 0 30 30"><g fill="none" stroke="#222" stroke-width="1.700" stroke-linejoin="round"><path d="M13,12.500 H8 V22 H18.500 V17.500"/><path d="M13,18 L13.600,14.600 L20.800,7.200 L23.600,10 L16.400,17.400 Z"/></g></svg></div>
<div class="cbtn" style="left:376.95px;top:97.750px;width:28.500px;height:28.500px;background:rgba(226,226,222,.82);box-shadow:0 1px 3px rgba(0,0,0,.3)"><svg style="left:-0.750px;top:-0.750px" width="30" height="30" viewBox="0 0 30 30"><path d="M7,21 L13,9.500 Q15,7 17.500,8.500 L18,13 L12.500,21 Z" fill="#7d7d79"/><g transform="rotate(-38 18 17)" fill="#ecece8" stroke="#666" stroke-width="1.200"><rect x="14" y="13.500" width="9" height="6.500"/><path d="M16.500,13.500 V16 M18.700,13.500 V16 M20.900,13.500 V16" stroke-width=".9"/></g></svg></div>
<!-- date filter -->
<div class="abs" style="left:1064.500px;top:97.300px;width:260.500px;height:35.500px;background:#fff;border:1px solid #c4c4c4;border-radius:4px">
 <svg style="position:absolute;left:10px;top:7.500px" width="17" height="18" viewBox="0 0 17 18"><path d="M1,3 H16 V17 H1 Z" fill="#333"/><rect x="2.800" y="6.500" width="11.400" height="8.700" fill="#fff"/><g fill="#333"><rect x="3.500" y="0.500" width="2.200" height="4"/><rect x="11.300" y="0.500" width="2.200" height="4"/><rect x="4.200" y="8" width="2" height="2"/><rect x="7.500" y="8" width="2" height="2"/><rect x="10.800" y="8" width="2" height="2"/><rect x="4.200" y="11.600" width="2" height="2"/><rect x="7.500" y="11.600" width="2" height="2"/><rect x="10.800" y="11.600" width="2" height="2"/></g></svg>
 <div style="position:absolute;left:34.500px;top:0;font-size:14.500px;line-height:33.500px;color:#a2a2a2;white-space:nowrap">表示期間を限定...</div>
</div>
<div class="abs" style="left:1348px;top:97px;width:36px;height:36px;background:#fff;border-radius:3px;box-shadow:0 1px 3px rgba(0,0,0,.4)"><svg style="position:absolute;left:9px;top:9px" width="18" height="18" viewBox="0 0 18 18"><path d="M1.500,3 L6.500,1.200 V15 L1.500,16.800 Z M11.500,3 L16.500,1.200 V15 L11.500,16.800 Z" fill="#6c6c6c"/><path d="M6.500,1.200 L11.500,3 V16.800 L6.500,15 Z" fill="none" stroke="#6c6c6c" stroke-width="1.300"/></svg></div>
<div class="cbtn" style="left:1351.500px;top:146.500px;width:29px;height:29px"><svg width="29" height="29" viewBox="0 0 29 29"><g fill="#222"><circle cx="14.500" cy="8.300" r="2.300"/><circle cx="14.500" cy="14.500" r="2.300"/><circle cx="14.500" cy="20.700" r="2.300"/></g></svg></div>


<div id="panel"><div class="abs" style="left:0.600px;top:0.200px;width:232px;height:526px">
  <div class="abs" style="left:11px;top:12px;font-size:12.5px;line-height:18px;color:#222">スタイル設定</div>
  <svg class="abs" style="left:202px;top:15px" width="12" height="12" viewBox="0 0 12 12"><path d="M1,1 L11,11 M11,1 L1,11" stroke="#555" stroke-width="1.300" fill="none"/></svg>
  <div class="abs" style="left:-1px;top:36px;width:234px;height:1px;background:#e4e4e4"></div>
  <div class="abs" style="left:11px;top:45px;font-size:13.4px;line-height:16px;color:#222">6rinpan.carbon_out</div>
  <div class="fld" style="top:78px"><div class="lb">色分けモード <svg style="vertical-align:-3.500px;margin-left:1px;margin-right:-3px" width="14.500" height="14.500" viewBox="0 0 13 13"><circle cx="6.500" cy="6.500" r="5.700" fill="none" stroke="#666" stroke-width="1"/><text x="6.500" y="10" font-size="9.500" font-family="Liberation Sans, sans-serif" text-anchor="middle" fill="#555">?</text></svg></div><div class="v">数値列による色分け</div><div class="ar"></div></div>
  <div class="fld" style="top:126px"><div class="lb">属性項目</div><div class="v" style="top:7px">樹高</div><div class="ar"></div></div>
  <div class="fld" style="top:177px"><div class="lb">簡易表示時の統計値 <svg style="vertical-align:-3.500px;margin-left:1px;margin-right:-3px" width="14.500" height="14.500" viewBox="0 0 13 13"><circle cx="6.500" cy="6.500" r="5.700" fill="none" stroke="#666" stroke-width="1"/><text x="6.500" y="10" font-size="9.500" font-family="Liberation Sans, sans-serif" text-anchor="middle" fill="#555">?</text></svg></div><div class="v" style="top:6px">最大値</div><div class="ar"></div></div>
  <div class="fld" style="top:225px;width:82px"><div class="lb">min</div><div class="v" style="left:18px;top:7px">7.172</div></div>
  <svg class="abs" style="left:108px;top:237px" width="16" height="17" viewBox="0 0 16 17"><path d="M8,4.800 A5.300,5.300 0 1 1 2.700,10.100" fill="none" stroke="#666" stroke-width="1.300"/><path d="M8.600,1.600 L5.200,4.800 L8.600,8 Z" fill="#666"/></svg>
  <div class="fld" style="top:225px;left:138px;width:83px"><div class="lb">max</div><div class="v" style="left:12px;top:7px">35.156</div></div>
  <!-- colour bar -->
  <div class="abs" style="left:11px;top:272px;width:209px;height:14px;background:linear-gradient(90deg,#19f22a 0.0%,#19f22a 12.5%,#30d22e 12.5%,#30d22e 25.0%,#3eae2a 25.0%,#3eae2a 37.5%,#608a20 37.5%,#608a20 50.0%,#8a691b 50.0%,#8a691b 62.5%,#a8491b 62.5%,#a8491b 75.0%,#cc2d19 75.0%,#cc2d19 87.5%,#ee2418 87.5%,#ee2418 100.0%)"></div>
  <div class="abs" style="left:6px;top:268px;width:22px;height:22px;background:#13ff28;border-radius:2px;box-shadow:0 1px 2px rgba(0,0,0,.4)"></div>
  <div class="abs" style="left:204.500px;top:268px;width:21px;height:22px;background:#f5211b;border-radius:2px;box-shadow:0 1px 2px rgba(0,0,0,.4)"></div>
  <!-- legend box -->
  <div class="abs" style="left:11px;top:294.500px;width:210px;height:141.500px;border:1px solid #e0e0e0;border-radius:3px">
    <svg class="abs" style="left:-5px;top:-7px" width="108" height="50" viewBox="0 0 108 50"><ellipse cx="52" cy="22" rx="48.500" ry="18" fill="none" stroke="#f1301f" stroke-width="2.600"/><path d="M20,26.500 H30.500" stroke="#666" stroke-width="1.300"/><circle cx="51" cy="26.500" r="10.500" fill="#ececec"/><text x="51" y="30" font-size="10" font-family="Liberation Sans, sans-serif" text-anchor="middle" fill="#222">8</text><path d="M70.500,26.500 H82 M76.200,20.800 V32.200" stroke="#555" stroke-width="1.300"/></svg>
    <div class="abs" style="left:130px;top:11.500px;width:17px;height:17px;background:#e1e1e1;border-radius:3px;box-shadow:0 1px 1px rgba(0,0,0,.25)"><svg width="17" height="17" viewBox="0 0 17 17"><text x="8.500" y="7.500" font-size="6" font-weight="700" font-family="Liberation Sans, sans-serif" text-anchor="middle" fill="#aaa">.0</text><path d="M13,11.500 H4 M6.500,9.500 L4,11.500 L6.500,13.500" stroke="#aaa" stroke-width="1.200" fill="none"/></svg></div>
    <div class="abs" style="left:153px;top:11.500px;width:17px;height:17px;background:#dcdcdc;border-radius:3px;box-shadow:0 1px 1px rgba(0,0,0,.25)"><svg width="17" height="17" viewBox="0 0 17 17"><text x="8.500" y="7.500" font-size="6.500" font-weight="700" font-family="Liberation Sans, sans-serif" text-anchor="middle" fill="#222">.00</text><path d="M3.500,11.500 H13 M10.500,9.500 L13,11.500 L10.500,13.500" stroke="#222" stroke-width="1.300" fill="none"/></svg></div>
    <svg class="abs" style="left:178px;top:13px" width="18" height="14" viewBox="0 0 18 14"><path d="M9,1 C4.500,1 1.500,4.500 0.500,7 C1.500,9.500 4.500,13 9,13 C13.500,13 16.500,9.500 17.500,7 C16.500,4.500 13.500,1 9,1 Z" fill="#2458c4"/><circle cx="9" cy="7" r="3.600" fill="#fff"/><circle cx="9" cy="7" r="1.900" fill="#2458c4"/></svg>
    <div class="lg" style="top:37px;background:#19f53a"></div><div class="lt" style="left:65px;top:37px">~</div><div class="lt" style="left:82px;top:37px">11</div>
    <div class="lg" style="top:56px;background:#2ed62f"></div><div class="lt" style="left:45px;top:56px">11</div><div class="lt" style="left:65px;top:56px">~</div><div class="lt" style="left:82px;top:56px">14</div>
    <div class="lg" style="top:75px;background:#40ae25"></div><div class="lt" style="left:45px;top:75px">14</div><div class="lt" style="left:65px;top:75px">~</div><div class="lt" style="left:82px;top:75px">18</div>
    <div class="lg" style="top:95px;background:#62871c"></div><div class="lt" style="left:45px;top:95px">18</div><div class="lt" style="left:65px;top:95px">~</div><div class="lt" style="left:82px;top:95px">21</div>
    <div class="lg" style="top:114px;background:#87641a"></div><div class="lt" style="left:45px;top:114px">21</div><div class="lt" style="left:65px;top:114px">~</div><div class="lt" style="left:82px;top:114px">25</div>
  </div>
  <div class="abs" style="left:11px;top:450px;font-size:11px;line-height:14px;color:#333">塗り</div>
  <div class="abs" style="left:56px;top:450px;font-size:11px;line-height:14px;color:#333">線の太さ</div>
  <div class="abs" style="left:17px;top:478.500px;width:26px;height:11px;border-radius:6px;background:#9db6e8"></div>
  <div class="abs" style="left:28.500px;top:476.500px;width:15px;height:15px;border-radius:50%;background:#2a62c9;box-shadow:0 1px 2px rgba(0,0,0,.4)"></div>
  <div class="abs" style="left:56px;top:470px;width:58px;height:36px;border:1px solid #bdbdbd;border-radius:4px"><div style="position:absolute;left:12px;top:8px;font-size:15px;line-height:18px;color:#222">2</div></div>
</div></div>

</body>
</html>
